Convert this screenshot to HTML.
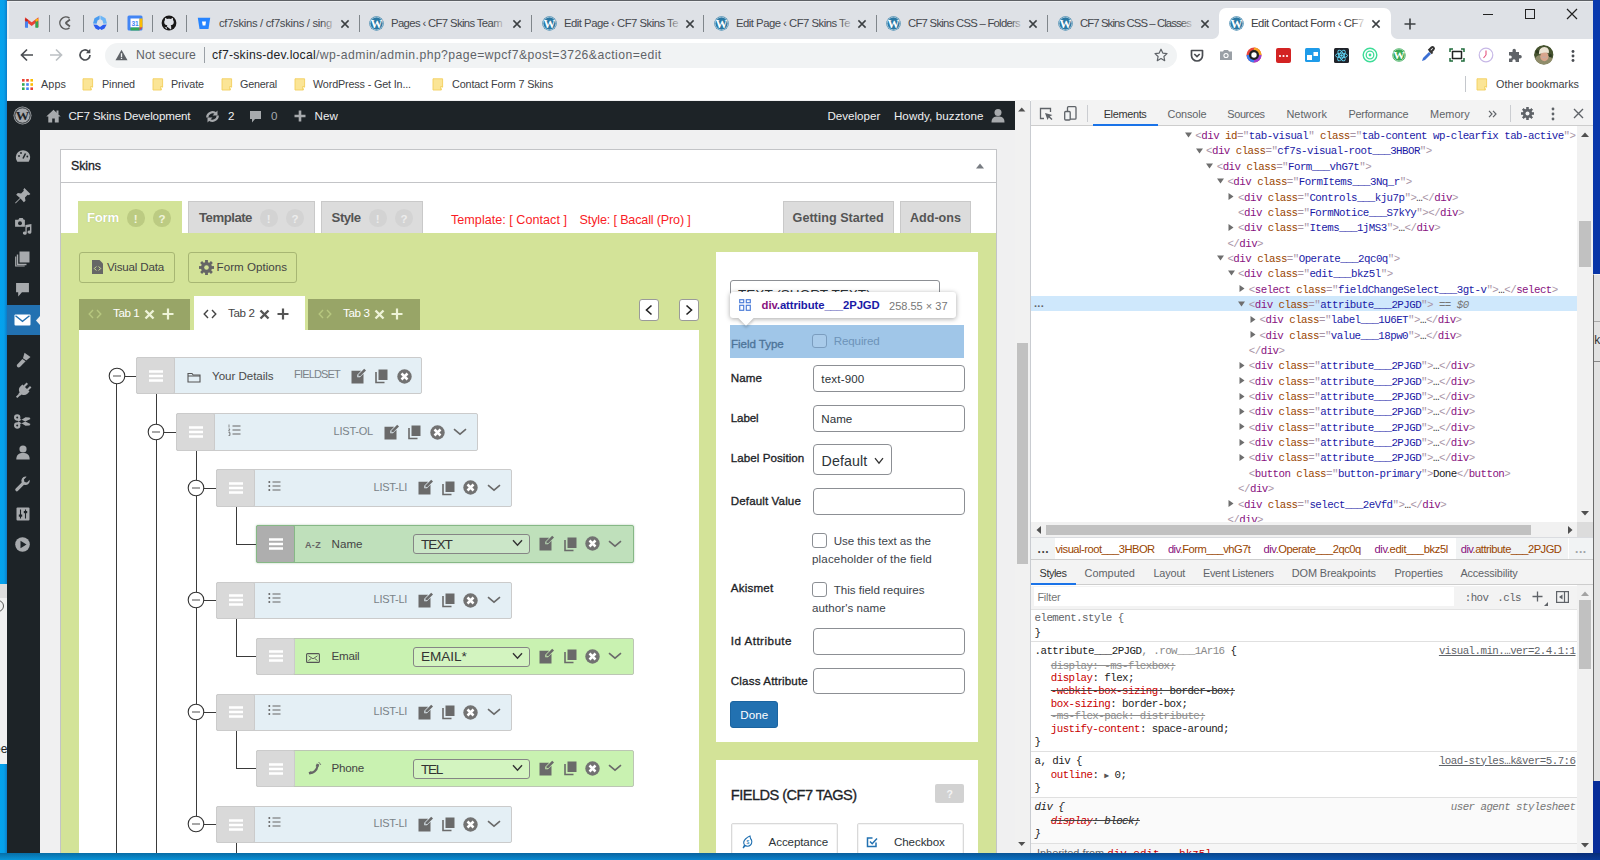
<!DOCTYPE html>
<html lang="en"><head><meta charset="utf-8"><title>Edit Contact Form ‹ CF7 Skins Development</title>
<style>
*{box-sizing:border-box;margin:0;padding:0}
html,body{width:1600px;height:860px;overflow:hidden}
body{position:relative;font-family:"Liberation Sans",sans-serif;background:linear-gradient(90deg,#0a9de2 0,#0b93dc 30%,#0c84d2 55%,#0d62bd 75%,#0a3c9c 100%)}
.b{position:absolute;display:block}
.t{position:absolute;white-space:nowrap;display:block}
svg{overflow:visible}
</style></head>
<body>
<div class="b" style="left:0;top:0;width:8px;height:860px;background:linear-gradient(90deg,#04a3ee 0,#06a0ea 50%,#0a7fcc 85%,#0a4f86 100%)"></div>
<div class="b" style="left:0;top:584px;width:7px;height:179.5px;background:#f0f0f0;border-top:14px solid #dddddd;overflow:hidden"><span class="t" style="left:-6px;top:144px;font-size:12px;color:#222">ee</span><span class="b" style="left:-8px;top:2px;width:12px;height:12px;border:1px solid #555;border-radius:50%"></span></div>
<div class="b" style="left:1592px;top:0;width:8px;height:860px;background:linear-gradient(180deg,#0839ae,#072c98)"></div>
<div class="b" style="left:1593px;top:273.5px;width:7px;height:507px;background:#e2e2e2;border-left:1.5px solid #6b6b6b;border-top:1px solid #f4f4f4;overflow:hidden"><span class="b" style="left:0;top:46px;width:8px;height:1px;background:#aaa"></span><span class="b" style="left:0;top:86px;width:8px;height:1px;background:#888"></span><span class="t" style="left:-3px;top:58px;font-size:12px;color:#333">:k</span></div>
<div class="b" style="left:7px;top:0px;width:1586px;height:39px;background:#dee1e6;"></div>
<div class="b" style="left:7px;top:0px;width:1586px;height:1px;background:#5d6065;"></div>
<div class="b" style="left:7px;top:1px;width:1586px;height:1px;background:#eceef1;"></div>
<div class="b" style="left:7px;top:1px;width:1.5px;height:38px;background:#eceef1;"></div>
<div class="b" style="left:7px;top:39px;width:1586px;height:62px;background:#fff;"></div>
<div class="b" style="left:1219px;top:8px;width:172px;height:31px;background:#fff;border-radius:7px 7px 0 0"></div>
<div class="b" style="left:1212px;top:32px;width:7px;height:7px;background:radial-gradient(circle at 0 0,#dee1e6 6.5px,#fff 7.5px)"></div>
<div class="b" style="left:1391px;top:32px;width:7px;height:7px;background:radial-gradient(circle at 100% 0,#dee1e6 6.5px,#fff 7.5px)"></div>
<svg class="b" style="left:24.8px;top:18.1px;" width="13.4" height="9.8" viewBox="0 0 16 12"><path d="M1.5 11V2.5L8 7.5L14.5 2.5V11" fill="none" stroke="#ea4335" stroke-width="3.5" stroke-linejoin="miter"/><path d="M1.7 12V4" stroke="#4285f4" stroke-width="3.5"/><path d="M14.3 12V4" stroke="#34a853" stroke-width="3.5"/><path d="M13 3.6l2.8 -2.1" stroke="#fbbc04" stroke-width="2.6"/><path d="M3 3.6l-2.8 -2.1" stroke="#c5221f" stroke-width="2.6"/></svg>
<div class="b" style="left:48.5px;top:15px;width:1.2px;height:17px;background:#80868b;"></div>
<div class="b" style="left:83px;top:15px;width:1.2px;height:17px;background:#80868b;"></div>
<div class="b" style="left:117px;top:15px;width:1.2px;height:17px;background:#80868b;"></div>
<div class="b" style="left:151.5px;top:15px;width:1.2px;height:17px;background:#80868b;"></div>
<div class="b" style="left:185.5px;top:15px;width:1.2px;height:17px;background:#80868b;"></div>
<div class="b" style="left:358.5px;top:15px;width:1.2px;height:17px;background:#80868b;"></div>
<div class="b" style="left:530.5px;top:15px;width:1.2px;height:17px;background:#80868b;"></div>
<div class="b" style="left:702.5px;top:15px;width:1.2px;height:17px;background:#80868b;"></div>
<div class="b" style="left:875.5px;top:15px;width:1.2px;height:17px;background:#80868b;"></div>
<div class="b" style="left:1046.5px;top:15px;width:1.2px;height:17px;background:#80868b;"></div>
<svg class="b" style="left:58px;top:15px;" width="16" height="16" viewBox="0 0 16 16"><path d="M11.5 3.2A6 6 0 1 0 11.5 12.8" fill="none" stroke="#5a5a5a" stroke-width="1.5"/><path d="M7.5 8L12 4.5M7.5 8L12 11.5" stroke="#5a5a5a" stroke-width="1.7" fill="none"/></svg>
<svg class="b" style="left:92px;top:15px;" width="16" height="16" viewBox="0 0 16 16"><path d="M7.6 .5L2.5 3.3L1 8.5L4.6 8.8L5.5 5.5L7.6 4.2z" fill="#4a9cf0"/><path d="M8.4 .5L13.5 3.3L15 8.5L11.4 8.8L10.5 5.5L8.4 4.2z" fill="#6db6f7"/><path d="M1.3 9.6L4.8 9.8L8 12L11.2 9.8L14.7 9.6L12.5 13.5L9.5 15L8 13.8L6.5 15L3.5 13.5z" fill="#2b5cf0"/></svg>
<svg class="b" style="left:126.5px;top:15px;" width="16" height="16" viewBox="0 0 16 16"><rect x="0.5" y="0.5" width="15" height="15" rx="1.5" fill="#4285f4"/><rect x="3.5" y="3.5" width="9" height="9" fill="#fff"/><rect x="12.5" y="3.5" width="3" height="9" fill="#fbbc04"/><rect x="3.5" y="12.5" width="9" height="3" fill="#34a853"/><path d="M12.5 12.5h3l-3 3z" fill="#ea4335"/><text x="8" y="11" font-size="6.5" font-weight="700" text-anchor="middle" fill="#4285f4" font-family="Liberation Sans,sans-serif">31</text></svg>
<svg class="b" style="left:161px;top:15px;" width="16" height="16" viewBox="0 0 16 16"><circle cx="8" cy="8" r="7.4" fill="#181717"/><path d="M5.8 14.5v-2.3c-2.2 .6 -2.8 -1.2 -3.4 -1.6M10.2 14.8v-3c0 -.8 -.3 -1.2 -.6 -1.5c1.8 -.2 3.2 -1 3.2 -3.3c0 -.8 -.3 -1.5 -.8 -2c.1 -.5 .2 -1.2 -.1 -1.9c0 0 -.7 -.2 -2 .8c-1.2 -.3 -2.6 -.3 -3.8 0c-1.3 -1 -2 -.8 -2 -.8c-.3 .7 -.2 1.4 -.1 1.9c-.5 .5 -.8 1.2 -.8 2c0 2.3 1.4 3.1 3.2 3.3c-.3 .3 -.5 .7 -.6 1.3" fill="#dee1e6" stroke="none"/></svg>
<svg class="b" style="left:197px;top:16.5px;" width="14" height="13" viewBox="0 0 14 13"><path d="M0.8 0.7h12.4l-1.7 11.3h-9z" fill="#2684ff"/><path d="M5 4.6h4l-.6 3.8h-2.7z" fill="#fff"/></svg>
<span class="t" style="letter-spacing:-0.316px;left:219px;top:15px;height:16px;line-height:16px;font-size:11.3px;color:#45484d;">cf7skins / cf7skins / sing</span>
<svg class="b" style="left:339px;top:17.5px;" width="12" height="12" viewBox="0 0 12 12"><path d="M2.4 2.4L9.6 9.6M9.6 2.4L2.4 9.6" stroke="#3c4043" stroke-width="1.5" fill="none"/></svg>
<svg class="b" style="left:369px;top:15.5px;" width="15" height="15" viewBox="0 0 16 16"><circle cx="8" cy="8" r="7.7" fill="#2a78a4"/><circle cx="8" cy="8" r="6.8" fill="none" stroke="#fff" stroke-width=".7" opacity=".8"/><text x="8" y="12.3" font-size="12.8" font-weight="700" font-family="Liberation Serif,serif" text-anchor="middle" fill="#fff">W</text></svg>
<span class="t" style="letter-spacing:-0.626px;left:391px;top:15px;height:16px;line-height:16px;font-size:11.3px;color:#45484d;">Pages ‹ CF7 Skins Team</span>
<svg class="b" style="left:511px;top:17.5px;" width="12" height="12" viewBox="0 0 12 12"><path d="M2.4 2.4L9.6 9.6M9.6 2.4L2.4 9.6" stroke="#3c4043" stroke-width="1.5" fill="none"/></svg>
<svg class="b" style="left:541.5px;top:15.5px;" width="15" height="15" viewBox="0 0 16 16"><circle cx="8" cy="8" r="7.7" fill="#2a78a4"/><circle cx="8" cy="8" r="6.8" fill="none" stroke="#fff" stroke-width=".7" opacity=".8"/><text x="8" y="12.3" font-size="12.8" font-weight="700" font-family="Liberation Serif,serif" text-anchor="middle" fill="#fff">W</text></svg>
<span class="t" style="letter-spacing:-0.501px;left:564px;top:15px;height:16px;line-height:16px;font-size:11.3px;color:#45484d;">Edit Page ‹ CF7 Skins Te</span>
<svg class="b" style="left:684px;top:17.5px;" width="12" height="12" viewBox="0 0 12 12"><path d="M2.4 2.4L9.6 9.6M9.6 2.4L2.4 9.6" stroke="#3c4043" stroke-width="1.5" fill="none"/></svg>
<svg class="b" style="left:713.5px;top:15.5px;" width="15" height="15" viewBox="0 0 16 16"><circle cx="8" cy="8" r="7.7" fill="#2a78a4"/><circle cx="8" cy="8" r="6.8" fill="none" stroke="#fff" stroke-width=".7" opacity=".8"/><text x="8" y="12.3" font-size="12.8" font-weight="700" font-family="Liberation Serif,serif" text-anchor="middle" fill="#fff">W</text></svg>
<span class="t" style="letter-spacing:-0.501px;left:736px;top:15px;height:16px;line-height:16px;font-size:11.3px;color:#45484d;">Edit Page ‹ CF7 Skins Te</span>
<svg class="b" style="left:856px;top:17.5px;" width="12" height="12" viewBox="0 0 12 12"><path d="M2.4 2.4L9.6 9.6M9.6 2.4L2.4 9.6" stroke="#3c4043" stroke-width="1.5" fill="none"/></svg>
<svg class="b" style="left:885.5px;top:15.5px;" width="15" height="15" viewBox="0 0 16 16"><circle cx="8" cy="8" r="7.7" fill="#2a78a4"/><circle cx="8" cy="8" r="6.8" fill="none" stroke="#fff" stroke-width=".7" opacity=".8"/><text x="8" y="12.3" font-size="12.8" font-weight="700" font-family="Liberation Serif,serif" text-anchor="middle" fill="#fff">W</text></svg>
<span class="t" style="letter-spacing:-0.728px;left:908px;top:15px;height:16px;line-height:16px;font-size:11.3px;color:#45484d;">CF7 Skins CSS – Folders</span>
<svg class="b" style="left:1027px;top:17.5px;" width="12" height="12" viewBox="0 0 12 12"><path d="M2.4 2.4L9.6 9.6M9.6 2.4L2.4 9.6" stroke="#3c4043" stroke-width="1.5" fill="none"/></svg>
<svg class="b" style="left:1057.5px;top:15.5px;" width="15" height="15" viewBox="0 0 16 16"><circle cx="8" cy="8" r="7.7" fill="#2a78a4"/><circle cx="8" cy="8" r="6.8" fill="none" stroke="#fff" stroke-width=".7" opacity=".8"/><text x="8" y="12.3" font-size="12.8" font-weight="700" font-family="Liberation Serif,serif" text-anchor="middle" fill="#fff">W</text></svg>
<span class="t" style="letter-spacing:-0.88px;left:1080px;top:15px;height:16px;line-height:16px;font-size:11.3px;color:#45484d;">CF7 Skins CSS – Classes</span>
<svg class="b" style="left:1199px;top:17.5px;" width="12" height="12" viewBox="0 0 12 12"><path d="M2.4 2.4L9.6 9.6M9.6 2.4L2.4 9.6" stroke="#3c4043" stroke-width="1.5" fill="none"/></svg>
<svg class="b" style="left:1228.5px;top:15.5px;" width="15" height="15" viewBox="0 0 16 16"><circle cx="8" cy="8" r="7.7" fill="#2a78a4"/><circle cx="8" cy="8" r="6.8" fill="none" stroke="#fff" stroke-width=".7" opacity=".8"/><text x="8" y="12.3" font-size="12.8" font-weight="700" font-family="Liberation Serif,serif" text-anchor="middle" fill="#fff">W</text></svg>
<span class="t" style="letter-spacing:-0.411px;left:1251px;top:15px;height:16px;line-height:16px;font-size:11.3px;color:#3c4043;">Edit Contact Form ‹ CF7</span>
<svg class="b" style="left:1370px;top:17.5px;" width="12" height="12" viewBox="0 0 12 12"><path d="M2.4 2.4L9.6 9.6M9.6 2.4L2.4 9.6" stroke="#3c4043" stroke-width="1.5" fill="none"/></svg>
<div class="b" style="left:322px;top:14px;width:14px;height:18px;background:linear-gradient(90deg,rgba(222,225,230,0),rgba(222,225,230,1))"></div>
<div class="b" style="left:492px;top:14px;width:14px;height:18px;background:linear-gradient(90deg,rgba(222,225,230,0),rgba(222,225,230,1))"></div>
<div class="b" style="left:668px;top:14px;width:14px;height:18px;background:linear-gradient(90deg,rgba(222,225,230,0),rgba(222,225,230,1))"></div>
<div class="b" style="left:840px;top:14px;width:14px;height:18px;background:linear-gradient(90deg,rgba(222,225,230,0),rgba(222,225,230,1))"></div>
<div class="b" style="left:1010px;top:14px;width:14px;height:18px;background:linear-gradient(90deg,rgba(222,225,230,0),rgba(222,225,230,1))"></div>
<div class="b" style="left:1181px;top:14px;width:14px;height:18px;background:linear-gradient(90deg,rgba(222,225,230,0),rgba(222,225,230,1))"></div>
<div class="b" style="left:1352px;top:14px;width:14px;height:18px;background:linear-gradient(90deg,rgba(255,255,255,0),rgba(255,255,255,1))"></div>
<svg class="b" style="left:1403px;top:16.5px;" width="14" height="14" viewBox="0 0 14 14"><path d="M7 1.5v11M1.5 7h11" stroke="#3c4043" stroke-width="1.6"/></svg>
<div class="b" style="left:1483px;top:14px;width:10px;height:1.2px;background:#222;"></div>
<div class="b" style="left:1525px;top:9px;width:10px;height:10px;border:1.2px solid #222"></div>
<svg class="b" style="left:1566px;top:8px;" width="12" height="12" viewBox="0 0 12 12"><path d="M1 1L11 11M11 1L1 11" stroke="#222" stroke-width="1.2" fill="none"/></svg>
<svg class="b" style="left:19px;top:47px;" width="16" height="16" viewBox="0 0 16 16"><path d="M14 8H2.8M8 2.5L2.5 8L8 13.5" fill="none" stroke="#4a4d52" stroke-width="1.7"/></svg>
<svg class="b" style="left:48px;top:47px;" width="16" height="16" viewBox="0 0 16 16"><path d="M2 8h11.2M8 2.5L13.5 8L8 13.5" fill="none" stroke="#bcc0c4" stroke-width="1.7"/></svg>
<svg class="b" style="left:77px;top:47px;" width="16" height="16" viewBox="0 0 16 16"><path d="M13 8A5 5 0 1 1 11.4 4.3" fill="none" stroke="#4a4d52" stroke-width="1.7"/><path d="M13.3 1.8v4.4h-4.4z" fill="#4a4d52"/></svg>
<div class="b" style="left:105px;top:42.5px;width:1072px;height:25.5px;border-radius:13px;background:#f1f3f4"></div>
<svg class="b" style="left:114.5px;top:49px;" width="13" height="12" viewBox="0 0 13 12"><path d="M6.5 0.8L12.5 11.2H0.5z" fill="#5f6368"/><path d="M6.5 4.3v3.6M6.5 8.8v1.3" stroke="#f1f3f4" stroke-width="1.3"/></svg>
<span class="t" style="letter-spacing:0.101px;left:136px;top:47px;height:16px;line-height:16px;font-size:12.2px;color:#5f6368;">Not secure</span>
<div class="b" style="left:204px;top:47px;width:1px;height:16px;background:#9aa0a6;"></div>
<span class="t" style="letter-spacing:0.24px;left:212px;top:47px;height:16px;line-height:16px;font-size:12.2px;color:#202124;">cf7-skins-dev.local</span>
<span class="t" style="letter-spacing:0.452px;left:316px;top:47px;height:16px;line-height:16px;font-size:12.2px;color:#5f6368;">/wp-admin/admin.php?page=wpcf7&amp;post=3726&amp;action=edit</span>
<svg class="b" style="left:1154px;top:48px;" width="14" height="14" viewBox="0 0 14 14"><path d="M7 1.2l1.8 3.9l4.2 .5l-3.1 2.9l.8 4.2L7 10.6l-3.7 2.1l.8 -4.2L1 5.6l4.2 -.5z" fill="none" stroke="#5f6368" stroke-width="1.2" stroke-linejoin="round"/></svg>
<svg class="b" style="left:1190px;top:48.5px;" width="14" height="13" viewBox="0 0 14 13"><path d="M1.5 1.5h11v5a5.5 5.5 0 0 1 -11 0z" fill="none" stroke="#4a4d52" stroke-width="1.7" stroke-linejoin="round"/><path d="M4.3 5l2.7 2.6L9.7 5" fill="none" stroke="#4a4d52" stroke-width="1.7"/></svg>
<svg class="b" style="left:1219px;top:49px;" width="14" height="12" viewBox="0 0 14 12"><path d="M1 2.5h3l1 -1.5h4l1 1.5h3v8.5h-12z" fill="#9aa0a6"/><circle cx="7" cy="6.5" r="2.6" fill="#fff"/><circle cx="7" cy="6.5" r="1.5" fill="#9aa0a6"/></svg>
<svg class="b" style="left:1246px;top:47px;" width="16" height="16" viewBox="0 0 16 16"><circle cx="8" cy="8" r="7.5" fill="#e8453c"/><path d="M8 .5A7.5 7.5 0 0 1 15.5 8H8z" fill="#f5a623"/><path d="M.5 8A7.5 7.5 0 0 0 8 15.5V8z" fill="#3b7ded"/><path d="M8 15.5A7.5 7.5 0 0 0 15.5 8H8z" fill="#a03fd0"/><circle cx="8" cy="8" r="5" fill="#222"/><circle cx="8" cy="8" r="2.7" fill="#fff"/></svg>
<svg class="b" style="left:1275.5px;top:47.5px;" width="15" height="15" viewBox="0 0 15 15"><rect x="0" y="0" width="15" height="15" rx="2" fill="#d32323"/><circle cx="4" cy="8" r="1.1" fill="#fff"/><circle cx="7.5" cy="8" r="1.1" fill="#fff"/><circle cx="11" cy="8" r="1.1" fill="#fff"/></svg>
<svg class="b" style="left:1304.5px;top:48px;" width="15" height="14" viewBox="0 0 15 14"><rect x="0" y="0" width="15" height="14" rx="1.5" fill="#1e9be9"/><rect x="2" y="7" width="5" height="5" fill="#fff"/><rect x="8.5" y="4" width="4.5" height="4" fill="#fff"/></svg>
<svg class="b" style="left:1333.5px;top:47.5px;" width="15" height="15" viewBox="0 0 15 15"><rect width="15" height="15" rx="1.5" fill="#20232a"/><g fill="none" stroke="#61dafb" stroke-width=".9"><ellipse cx="7.5" cy="7.5" rx="6" ry="2.3"/><ellipse cx="7.5" cy="7.5" rx="6" ry="2.3" transform="rotate(60 7.5 7.5)"/><ellipse cx="7.5" cy="7.5" rx="6" ry="2.3" transform="rotate(120 7.5 7.5)"/></g><circle cx="7.5" cy="7.5" r="1.2" fill="#61dafb"/></svg>
<svg class="b" style="left:1362px;top:47px;" width="16" height="16" viewBox="0 0 16 16"><circle cx="8" cy="8" r="6.8" fill="none" stroke="#3ddc97" stroke-width="1.4"/><circle cx="8" cy="8" r="3.8" fill="none" stroke="#3ddc97" stroke-width="1.3"/><circle cx="8" cy="8" r="1.4" fill="#3ddc97"/></svg>
<svg class="b" style="left:1392px;top:48px;" width="14" height="14" viewBox="0 0 16 16"><circle cx="8" cy="8" r="7.7" fill="#35a853"/><circle cx="8" cy="8" r="6.8" fill="none" stroke="#fff" stroke-width=".7" opacity=".8"/><text x="8" y="12.3" font-size="12.8" font-weight="700" font-family="Liberation Serif,serif" text-anchor="middle" fill="#fff">W</text></svg>
<svg class="b" style="left:1420px;top:47px;" width="16" height="16" viewBox="0 0 16 16"><path d="M2 14l1 -3l6 -6l2 2l-6 6z" fill="#3b6fd4"/><path d="M9.5 3.5l3 3M10.5 5.5l3 -3a1.4 1.4 0 0 0 -2 -2l-3 3" stroke="#333" stroke-width="2" fill="none"/></svg>
<svg class="b" style="left:1449px;top:48px;" width="16" height="14" viewBox="0 0 16 14"><path d="M1 4V1h3M12 1h3v3M15 10v3h-3M4 13H1v-3" fill="none" stroke="#1e6b3a" stroke-width="1.5"/><rect x="3.5" y="3.5" width="9" height="7" fill="none" stroke="#222" stroke-width="1.5"/></svg>
<svg class="b" style="left:1478px;top:47px;" width="16" height="16" viewBox="0 0 16 16"><circle cx="8" cy="8" r="6.8" fill="#fff" stroke="#c7b8e6" stroke-width="1.2"/><path d="M8 8V3.5M8 8l-2.5 3" stroke="#e5527d" stroke-width="1.1" fill="none"/></svg>
<svg class="b" style="left:1506.8px;top:47.5px;" width="15" height="15" viewBox="0 0 15 15"><path d="M5.5 2.5a1.7 1.7 0 0 1 3.4 0V4h3.1v3.1h1.1a1.7 1.7 0 0 1 0 3.4H12V14H8.6v-1.2a1.6 1.6 0 0 0 -3.2 0V14H2v-3.4h1.2a1.6 1.6 0 0 0 0 -3.2H2V4h3.5z" fill="#5f6368"/></svg>
<svg class="b" style="left:1534.3px;top:45.3px;border-radius:50%;overflow:hidden;" width="19.4" height="19.4" viewBox="0 0 20 20"><circle cx="10" cy="10" r="10" fill="#46532f"/><path d="M1 14c2 -3 4 -4 6 -3l6 .5c3 -.5 5 1 6 3.5a10 10 0 0 1 -18 -1z" fill="#8f8c6a"/><ellipse cx="10.7" cy="11.8" rx="4.3" ry="5" fill="#d8a58d"/><path d="M5.3 9.6c-.8 -4.5 2 -7.6 5.3 -7.6c3.6 0 5.6 3 4.6 6.5c-2.5 -1 -5.5 -1 -8 .3c-.8 .4 -1.5 .6 -1.9 .8z" fill="#ece4d4"/><path d="M8.6 12.8c1.2 -.5 2.8 -.5 4 0" stroke="#b9b0ae" stroke-width="1" fill="none"/><circle cx="3.5" cy="7" r="1.8" fill="#2f3b22"/><circle cx="16.8" cy="11" r="1.6" fill="#2f3b22"/></svg>
<svg class="b" style="left:1571.4px;top:47.5px;" width="4" height="16" viewBox="0 0 4 16"><circle cx="2" cy="3.5" r="1.45" fill="#4a4d52"/><circle cx="2" cy="8" r="1.45" fill="#4a4d52"/><circle cx="2" cy="12.5" r="1.45" fill="#4a4d52"/></svg>
<svg class="b" style="left:21.5px;top:78.5px;" width="11" height="11" viewBox="0 0 11 11"><rect x="0" y="0" width="2.6" height="2.6" fill="#ea4335"/><rect x="4.2" y="0" width="2.6" height="2.6" fill="#ea4335"/><rect x="8.4" y="0" width="2.6" height="2.6" fill="#fbbc04"/><rect x="0" y="4.2" width="2.6" height="2.6" fill="#34a853"/><rect x="4.2" y="4.2" width="2.6" height="2.6" fill="#4285f4"/><rect x="8.4" y="4.2" width="2.6" height="2.6" fill="#fbbc04"/><rect x="0" y="8.4" width="2.6" height="2.6" fill="#34a853"/><rect x="4.2" y="8.4" width="2.6" height="2.6" fill="#4285f4"/><rect x="8.4" y="8.4" width="2.6" height="2.6" fill="#ea4335"/></svg>
<span class="t" style="letter-spacing:0.096px;left:41px;top:76px;height:16px;line-height:16px;font-size:10.8px;color:#3c4043;">Apps</span>
<svg class="b" style="left:82px;top:77.5px;" width="12" height="13" viewBox="0 0 12 13"><path d="M1 .8h9.6v8.4l-1.2 0v2.8h-8.4z" fill="#fbe596" stroke="#f3cf5d" stroke-width=".9"/><path d="M8.6 12v-3.5h2.3" fill="#fff3c4" stroke="#f3cf5d" stroke-width=".8"/></svg>
<span class="t" style="letter-spacing:-0.105px;left:102px;top:76px;height:16px;line-height:16px;font-size:10.8px;color:#3c4043;">Pinned</span>
<svg class="b" style="left:152px;top:77.5px;" width="12" height="13" viewBox="0 0 12 13"><path d="M1 .8h9.6v8.4l-1.2 0v2.8h-8.4z" fill="#fbe596" stroke="#f3cf5d" stroke-width=".9"/><path d="M8.6 12v-3.5h2.3" fill="#fff3c4" stroke="#f3cf5d" stroke-width=".8"/></svg>
<span class="t" style="letter-spacing:-0.088px;left:171px;top:76px;height:16px;line-height:16px;font-size:10.8px;color:#3c4043;">Private</span>
<svg class="b" style="left:221px;top:77.5px;" width="12" height="13" viewBox="0 0 12 13"><path d="M1 .8h9.6v8.4l-1.2 0v2.8h-8.4z" fill="#fbe596" stroke="#f3cf5d" stroke-width=".9"/><path d="M8.6 12v-3.5h2.3" fill="#fff3c4" stroke="#f3cf5d" stroke-width=".8"/></svg>
<span class="t" style="letter-spacing:-0.203px;left:240px;top:76px;height:16px;line-height:16px;font-size:10.8px;color:#3c4043;">General</span>
<svg class="b" style="left:294px;top:77.5px;" width="12" height="13" viewBox="0 0 12 13"><path d="M1 .8h9.6v8.4l-1.2 0v2.8h-8.4z" fill="#fbe596" stroke="#f3cf5d" stroke-width=".9"/><path d="M8.6 12v-3.5h2.3" fill="#fff3c4" stroke="#f3cf5d" stroke-width=".8"/></svg>
<span class="t" style="letter-spacing:-0.154px;left:313px;top:76px;height:16px;line-height:16px;font-size:10.8px;color:#3c4043;">WordPress - Get In...</span>
<svg class="b" style="left:432px;top:77.5px;" width="12" height="13" viewBox="0 0 12 13"><path d="M1 .8h9.6v8.4l-1.2 0v2.8h-8.4z" fill="#fbe596" stroke="#f3cf5d" stroke-width=".9"/><path d="M8.6 12v-3.5h2.3" fill="#fff3c4" stroke="#f3cf5d" stroke-width=".8"/></svg>
<span class="t" style="letter-spacing:-0.142px;left:452px;top:76px;height:16px;line-height:16px;font-size:10.8px;color:#3c4043;">Contact Form 7 Skins</span>
<div class="b" style="left:1465px;top:76px;width:1px;height:16px;background:#c4c7cc;"></div>
<svg class="b" style="left:1476px;top:77.5px;" width="12" height="13" viewBox="0 0 12 13"><path d="M1 .8h9.6v8.4l-1.2 0v2.8h-8.4z" fill="#fbe596" stroke="#f3cf5d" stroke-width=".9"/><path d="M8.6 12v-3.5h2.3" fill="#fff3c4" stroke="#f3cf5d" stroke-width=".8"/></svg>
<span class="t" style="letter-spacing:0.011px;left:1496px;top:76px;height:16px;line-height:16px;font-size:10.8px;color:#3c4043;">Other bookmarks</span>
<div class="b" style="left:7px;top:100px;width:1023px;height:752.5px;background:#f0f0f1;"></div>
<div class="b" style="left:60px;top:149px;width:937px;height:704px;background:#fff;border:1px solid #c3c4c7;border-bottom:0;"></div>
<div class="b" style="left:61px;top:182px;width:935px;height:1px;background:#c3c4c7;"></div>
<span class="t" style="letter-spacing:-0.065px;left:71px;top:158px;height:16px;line-height:16px;font-size:12.4px;color:#1d2327;-webkit-text-stroke:.32px;">Skins</span>
<svg class="b" style="left:975.6px;top:162.5px;" width="8" height="6" viewBox="0 0 8 6"><path d="M0 5.5L4 .5L8 5.5z" fill="#787c82"/></svg>
<div class="b" style="left:78px;top:201px;width:104px;height:33px;background:#d3e398;"></div>
<span class="t" style="letter-spacing:-0.25px;left:87px;top:210px;height:16px;line-height:16px;font-size:13.2px;color:#fff;font-weight:700;text-shadow:0 0 1px rgba(120,140,60,.5);">Form</span>
<div class="b" style="left:127.2px;top:209.2px;width:17.6px;height:17.6px;border-radius:50%;background:#bccb82"></div>
<span class="t" style="left:133.8px;top:210.5px;height:16px;line-height:16px;font-size:11.5px;color:#f0f4dc;font-weight:700;">!</span>
<div class="b" style="left:153.2px;top:209.2px;width:17.6px;height:17.6px;border-radius:50%;background:#bccb82"></div>
<span class="t" style="left:158.5px;top:210.5px;height:16px;line-height:16px;font-size:11.5px;color:#f0f4dc;font-weight:700;">?</span>
<div class="b" style="left:188px;top:201px;width:126.5px;height:32px;background:#dcdcdc;border:1px solid #c9c9c9;border-bottom:0;"></div>
<span class="t" style="letter-spacing:-0.496px;left:199px;top:210px;height:16px;line-height:16px;font-size:13.2px;color:#555;font-weight:700;">Template</span>
<div class="b" style="left:260.2px;top:209.2px;width:17.6px;height:17.6px;border-radius:50%;background:#d3d3d3"></div>
<span class="t" style="left:266.8px;top:210.5px;height:16px;line-height:16px;font-size:11.5px;color:#ececec;font-weight:700;">!</span>
<div class="b" style="left:286.2px;top:209.2px;width:17.6px;height:17.6px;border-radius:50%;background:#d3d3d3"></div>
<span class="t" style="left:291.5px;top:210.5px;height:16px;line-height:16px;font-size:11.5px;color:#ececec;font-weight:700;">?</span>
<div class="b" style="left:321px;top:201px;width:102px;height:32px;background:#dcdcdc;border:1px solid #c9c9c9;border-bottom:0;"></div>
<span class="t" style="letter-spacing:-0.51px;left:331.6px;top:210px;height:16px;line-height:16px;font-size:13.2px;color:#555;font-weight:700;">Style</span>
<div class="b" style="left:369.2px;top:209.2px;width:17.6px;height:17.6px;border-radius:50%;background:#d3d3d3"></div>
<span class="t" style="left:375.8px;top:210.5px;height:16px;line-height:16px;font-size:11.5px;color:#ececec;font-weight:700;">!</span>
<div class="b" style="left:395.2px;top:209.2px;width:17.6px;height:17.6px;border-radius:50%;background:#d3d3d3"></div>
<span class="t" style="left:400.5px;top:210.5px;height:16px;line-height:16px;font-size:11.5px;color:#ececec;font-weight:700;">?</span>
<span class="t" style="letter-spacing:0.021px;left:451px;top:211.7px;height:16px;line-height:16px;font-size:12.6px;color:#f91c26;">Template: [ Contact ]</span>
<span class="t" style="letter-spacing:-0.162px;left:579.6px;top:211.7px;height:16px;line-height:16px;font-size:12.6px;color:#f91c26;">Style: [ Bacall (Pro) ]</span>
<div class="b" style="left:782.5px;top:201px;width:111px;height:32px;background:#dcdcdc;border:1px solid #c9c9c9;border-bottom:0;"></div>
<span class="t" style="letter-spacing:0.006px;left:792.6px;top:210px;height:16px;line-height:16px;font-size:12.6px;color:#555;font-weight:700;">Getting Started</span>
<div class="b" style="left:900px;top:201px;width:71px;height:32px;background:#dcdcdc;border:1px solid #c9c9c9;border-bottom:0;"></div>
<span class="t" style="letter-spacing:-0.013px;left:910px;top:210px;height:16px;line-height:16px;font-size:12.6px;color:#555;font-weight:700;">Add-ons</span>
<div class="b" style="left:61px;top:233px;width:935px;height:620px;background:#d3e398;"></div>
<div class="b" style="left:79px;top:252px;width:95.5px;height:31px;border:1px solid #a7b673;border-radius:3px;"></div>
<svg class="b" style="left:91.5px;top:260px;" width="11" height="14" viewBox="0 0 11 14"><path d="M0 0h7.5l3.5 3.5v10.5h-11z" fill="#666"/><path d="M4.3 6.5l-2 2l2 2M6.7 6.5l2 2l-2 2" stroke="#d3e398" stroke-width="1" fill="none"/></svg>
<span class="t" style="letter-spacing:-0.192px;left:107px;top:259px;height:16px;line-height:16px;font-size:11.6px;color:#444;">Visual Data</span>
<div class="b" style="left:188px;top:252px;width:109px;height:31px;border:1px solid #a7b673;border-radius:3px;"></div>
<svg class="b" style="left:199px;top:259.5px;" width="15" height="15" viewBox="0 0 15 15"><rect x="6.3" y="0" width="2.4" height="15" fill="#666" transform="rotate(0 7.5 7.5)"/><rect x="6.3" y="0" width="2.4" height="15" fill="#666" transform="rotate(45 7.5 7.5)"/><rect x="6.3" y="0" width="2.4" height="15" fill="#666" transform="rotate(90 7.5 7.5)"/><rect x="6.3" y="0" width="2.4" height="15" fill="#666" transform="rotate(135 7.5 7.5)"/><rect x="6.3" y="0" width="2.4" height="15" fill="#666" transform="rotate(180 7.5 7.5)"/><rect x="6.3" y="0" width="2.4" height="15" fill="#666" transform="rotate(225 7.5 7.5)"/><rect x="6.3" y="0" width="2.4" height="15" fill="#666" transform="rotate(270 7.5 7.5)"/><rect x="6.3" y="0" width="2.4" height="15" fill="#666" transform="rotate(315 7.5 7.5)"/><circle cx="7.5" cy="7.5" r="5.5" fill="#666"/><circle cx="7.5" cy="7.5" r="2.3" fill="#d3e398"/></svg>
<span class="t" style="letter-spacing:0.011px;left:216.6px;top:259px;height:16px;line-height:16px;font-size:11.6px;color:#444;">Form Options</span>
<div class="b" style="left:79px;top:299px;width:111px;height:30.5px;background:#98a567;"></div>
<svg class="b" style="left:88px;top:309px;" width="14" height="10" viewBox="0 0 14 10"><path d="M5 1L1.2 5L5 9M9 1l3.8 4L9 9" fill="none" stroke="#b7c77f" stroke-width="1.4"/></svg>
<span class="t" style="letter-spacing:-0.395px;left:113px;top:305px;height:16px;line-height:16px;font-size:11.6px;color:#fff;">Tab 1</span>
<svg class="b" style="left:144px;top:309px;" width="11" height="11" viewBox="0 0 11 11"><path d="M1.5 1.5l8 8M9.5 1.5l-8 8" stroke="#eef3d8" stroke-width="2.4"/></svg>
<svg class="b" style="left:162px;top:307.5px;" width="12" height="12" viewBox="0 0 12 12"><path d="M6 .5v11M.5 6h11" stroke="#eef3d8" stroke-width="2.2"/></svg>
<div class="b" style="left:193.5px;top:295.5px;width:111px;height:34.5px;background:#fff;"></div>
<svg class="b" style="left:203px;top:309px;" width="14" height="10" viewBox="0 0 14 10"><path d="M5 1L1.2 5L5 9M9 1l3.8 4L9 9" fill="none" stroke="#444" stroke-width="1.4"/></svg>
<span class="t" style="letter-spacing:-0.335px;left:228px;top:305px;height:16px;line-height:16px;font-size:11.6px;color:#444;">Tab 2</span>
<svg class="b" style="left:259px;top:309px;" width="11" height="11" viewBox="0 0 11 11"><path d="M1.5 1.5l8 8M9.5 1.5l-8 8" stroke="#555" stroke-width="2.4"/></svg>
<svg class="b" style="left:276.7px;top:307.5px;" width="12" height="12" viewBox="0 0 12 12"><path d="M6 .5v11M.5 6h11" stroke="#555" stroke-width="2.2"/></svg>
<div class="b" style="left:308px;top:299px;width:112px;height:30.5px;background:#98a567;"></div>
<svg class="b" style="left:317.8px;top:309px;" width="14" height="10" viewBox="0 0 14 10"><path d="M5 1L1.2 5L5 9M9 1l3.8 4L9 9" fill="none" stroke="#b7c77f" stroke-width="1.4"/></svg>
<span class="t" style="letter-spacing:-0.335px;left:343px;top:305px;height:16px;line-height:16px;font-size:11.6px;color:#fff;">Tab 3</span>
<svg class="b" style="left:373.5px;top:309px;" width="11" height="11" viewBox="0 0 11 11"><path d="M1.5 1.5l8 8M9.5 1.5l-8 8" stroke="#eef3d8" stroke-width="2.4"/></svg>
<svg class="b" style="left:391.4px;top:307.5px;" width="12" height="12" viewBox="0 0 12 12"><path d="M6 .5v11M.5 6h11" stroke="#eef3d8" stroke-width="2.2"/></svg>
<div class="b" style="left:79px;top:329.5px;width:619.5px;height:523.5px;background:#fff;"></div>
<div class="b" style="left:639px;top:299px;width:20px;height:22px;background:#fff;border:1px solid #9a9a9a;border-radius:3px;"></div>
<svg class="b" style="left:643px;top:303px;" width="12" height="14" viewBox="0 0 12 14"><path d="M8.5 2.5L3.5 7L8.5 11.5" fill="none" stroke="#222" stroke-width="1.6"/></svg>
<div class="b" style="left:679px;top:299px;width:20px;height:22px;background:#fff;border:1px solid #9a9a9a;border-radius:3px;"></div>
<svg class="b" style="left:683px;top:303px;" width="12" height="14" viewBox="0 0 12 14"><path d="M3.5 2.5L8.5 7L3.5 11.5" fill="none" stroke="#222" stroke-width="1.6"/></svg>
<div class="b" style="left:116px;top:376px;width:1px;height:477px;background:#3a3a3a;"></div>
<div class="b" style="left:116px;top:375.5px;width:21px;height:1px;background:#3a3a3a;"></div>
<div class="b" style="left:155.7px;top:394px;width:1px;height:459px;background:#3a3a3a;"></div>
<div class="b" style="left:155.7px;top:431.5px;width:21.3px;height:1px;background:#3a3a3a;"></div>
<div class="b" style="left:195.5px;top:450px;width:1px;height:374px;background:#3a3a3a;"></div>
<div class="b" style="left:196px;top:487.5px;width:21px;height:1px;background:#3a3a3a;"></div>
<div class="b" style="left:196px;top:599.5px;width:21px;height:1px;background:#3a3a3a;"></div>
<div class="b" style="left:196px;top:711.5px;width:21px;height:1px;background:#3a3a3a;"></div>
<div class="b" style="left:196px;top:823.5px;width:21px;height:1px;background:#3a3a3a;"></div>
<div class="b" style="left:235.5px;top:506px;width:1px;height:39px;background:#3a3a3a;"></div>
<div class="b" style="left:235.5px;top:544px;width:21.5px;height:1px;background:#3a3a3a;"></div>
<div class="b" style="left:235.5px;top:618px;width:1px;height:39px;background:#3a3a3a;"></div>
<div class="b" style="left:235.5px;top:656px;width:21.5px;height:1px;background:#3a3a3a;"></div>
<div class="b" style="left:235.5px;top:730px;width:1px;height:39px;background:#3a3a3a;"></div>
<div class="b" style="left:235.5px;top:768px;width:21.5px;height:1px;background:#3a3a3a;"></div>
<div class="b" style="left:235.5px;top:842px;width:1px;height:11px;background:#3a3a3a;"></div>
<div class="b" style="left:136.3px;top:357.1px;width:286.2px;height:37.4px;background:#e4eff5;border:1px solid #cbcbcb;border-radius:2px;"></div>
<div class="b" style="left:136.3px;top:357.1px;width:38.9px;height:37.4px;background:#d9d9d9;border:1px solid #cbcbcb;border-radius:2px;"></div>
<svg class="b" style="left:148.75px;top:368.8px;" width="14" height="14" viewBox="0 0 14 14"><path d="M0 2.5h14M0 7h14M0 11.5h14" stroke="#fff" stroke-width="2.4"/></svg>
<svg class="b" style="left:107.6px;top:367px;" width="18" height="18" viewBox="0 0 18 18"><circle cx="9" cy="9" r="7.8" fill="#fff" stroke="#333" stroke-width="1.1"/><path d="M5 9h8" stroke="#777" stroke-width="1.3"/></svg>
<svg class="b" style="left:187px;top:371px;" width="14" height="12" viewBox="0 0 14 12"><path d="M1 2.5h4l1.2 1.5h6.8v7h-12z" fill="none" stroke="#555" stroke-width="1.1"/><path d="M1 5h12" stroke="#555" stroke-width="1"/></svg>
<span class="t" style="letter-spacing:-0.043px;left:212px;top:367.8px;height:16px;line-height:16px;font-size:11.6px;color:#4a4a4a;">Your Details</span>
<span class="t" style="letter-spacing:-0.821px;left:294px;top:366.3px;height:16px;line-height:16px;font-size:11px;color:#7a8288;">FIELDSET</span>
<svg class="b" style="left:351.25px;top:367.55px;" width="15.5" height="15.5" viewBox="0 0 15.5 15.5"><path d="M.5 2.8h9.7l-3.9 3.9v2.6h2.6l3.6 -3.6v9.8h-12z" fill="#6a6a6a"/><path d="M7.2 8.5l.5 -2.3l5.5 -5.5l1.8 1.8l-5.5 5.5z" fill="#6a6a6a"/></svg>
<svg class="b" style="left:374.5px;top:369px;" width="13" height="14" viewBox="0 0 13 14"><path d="M3.5 .5h9v10.5h-9z" fill="#6a6a6a"/><path d="M1 3v10.5h8.5" fill="none" stroke="#6a6a6a" stroke-width="1.6"/></svg>
<svg class="b" style="left:396.5px;top:368.5px;" width="15" height="15" viewBox="0 0 15 15"><circle cx="7.5" cy="7.5" r="7.2" fill="#727272"/><path d="M4.5 4.5l6 6M10.5 4.5l-6 6" stroke="#fff" stroke-width="2.5"/></svg>
<div class="b" style="left:176.3px;top:413.2px;width:301.7px;height:37.4px;background:#e4eff5;border:1px solid #cbcbcb;border-radius:2px;"></div>
<div class="b" style="left:176.3px;top:413.2px;width:38.9px;height:37.4px;background:#d9d9d9;border:1px solid #cbcbcb;border-radius:2px;"></div>
<svg class="b" style="left:188.75px;top:424.9px;" width="14" height="14" viewBox="0 0 14 14"><path d="M0 2.5h14M0 7h14M0 11.5h14" stroke="#fff" stroke-width="2.4"/></svg>
<svg class="b" style="left:147.2px;top:423px;" width="18" height="18" viewBox="0 0 18 18"><circle cx="9" cy="9" r="7.8" fill="#fff" stroke="#333" stroke-width="1.1"/><path d="M5 9h8" stroke="#777" stroke-width="1.3"/></svg>
<svg class="b" style="left:228px;top:423.6px;" width="13" height="12" viewBox="0 0 13 12"><path d="M4.5 2h8M4.5 6h8M4.5 10h8" stroke="#666" stroke-width="1.1"/><path d="M1 .5v3M.5 5h1.5l-1.5 2h1.5M.5 8.5h1.5v3h-1.5M1 10h1" stroke="#666" stroke-width=".7" fill="none"/></svg>
<span class="t" style="letter-spacing:-0.209px;left:333.5px;top:423px;height:16px;line-height:16px;font-size:11px;color:#7a8288;">LIST-OL</span>
<svg class="b" style="left:384.25px;top:423.55px;" width="15.5" height="15.5" viewBox="0 0 15.5 15.5"><path d="M.5 2.8h9.7l-3.9 3.9v2.6h2.6l3.6 -3.6v9.8h-12z" fill="#6a6a6a"/><path d="M7.2 8.5l.5 -2.3l5.5 -5.5l1.8 1.8l-5.5 5.5z" fill="#6a6a6a"/></svg>
<svg class="b" style="left:407.5px;top:425px;" width="13" height="14" viewBox="0 0 13 14"><path d="M3.5 .5h9v10.5h-9z" fill="#6a6a6a"/><path d="M1 3v10.5h8.5" fill="none" stroke="#6a6a6a" stroke-width="1.6"/></svg>
<svg class="b" style="left:429.5px;top:424.5px;" width="15" height="15" viewBox="0 0 15 15"><circle cx="7.5" cy="7.5" r="7.2" fill="#727272"/><path d="M4.5 4.5l6 6M10.5 4.5l-6 6" stroke="#fff" stroke-width="2.5"/></svg>
<svg class="b" style="left:452.6px;top:428px;" width="14" height="8" viewBox="0 0 14 8"><path d="M1 1.2l6 5l6 -5" fill="none" stroke="#6a6a6a" stroke-width="1.6"/></svg>
<div class="b" style="left:216.1px;top:469.3px;width:295.9px;height:37.4px;background:#e4eff5;border:1px solid #cbcbcb;border-radius:2px;"></div>
<div class="b" style="left:216.1px;top:469.3px;width:38.9px;height:37.4px;background:#d9d9d9;border:1px solid #cbcbcb;border-radius:2px;"></div>
<svg class="b" style="left:228.55px;top:481px;" width="14" height="14" viewBox="0 0 14 14"><path d="M0 2.5h14M0 7h14M0 11.5h14" stroke="#fff" stroke-width="2.4"/></svg>
<svg class="b" style="left:187px;top:478.8px;" width="18" height="18" viewBox="0 0 18 18"><circle cx="9" cy="9" r="7.8" fill="#fff" stroke="#333" stroke-width="1.1"/><path d="M5 9h8" stroke="#777" stroke-width="1.3"/></svg>
<svg class="b" style="left:267.5px;top:479.8px;" width="13" height="12" viewBox="0 0 13 12"><path d="M4.5 2h8M4.5 6h8M4.5 10h8" stroke="#666" stroke-width="1.1"/><circle cx="1.3" cy="2" r="1" fill="#666"/><circle cx="1.3" cy="6" r="1" fill="#666"/><circle cx="1.3" cy="10" r="1" fill="#666"/></svg>
<span class="t" style="letter-spacing:-0.294px;left:373.6px;top:478.8px;height:16px;line-height:16px;font-size:11px;color:#7a8288;">LIST-LI</span>
<svg class="b" style="left:417.95px;top:479.35px;" width="15.5" height="15.5" viewBox="0 0 15.5 15.5"><path d="M.5 2.8h9.7l-3.9 3.9v2.6h2.6l3.6 -3.6v9.8h-12z" fill="#6a6a6a"/><path d="M7.2 8.5l.5 -2.3l5.5 -5.5l1.8 1.8l-5.5 5.5z" fill="#6a6a6a"/></svg>
<svg class="b" style="left:441.5px;top:480.8px;" width="13" height="14" viewBox="0 0 13 14"><path d="M3.5 .5h9v10.5h-9z" fill="#6a6a6a"/><path d="M1 3v10.5h8.5" fill="none" stroke="#6a6a6a" stroke-width="1.6"/></svg>
<svg class="b" style="left:463.2px;top:480.3px;" width="15" height="15" viewBox="0 0 15 15"><circle cx="7.5" cy="7.5" r="7.2" fill="#727272"/><path d="M4.5 4.5l6 6M10.5 4.5l-6 6" stroke="#fff" stroke-width="2.5"/></svg>
<svg class="b" style="left:486.5px;top:483.8px;" width="14" height="8" viewBox="0 0 14 8"><path d="M1 1.2l6 5l6 -5" fill="none" stroke="#6a6a6a" stroke-width="1.6"/></svg>
<div class="b" style="left:216.1px;top:581.5px;width:295.9px;height:37.4px;background:#e4eff5;border:1px solid #cbcbcb;border-radius:2px;"></div>
<div class="b" style="left:216.1px;top:581.5px;width:38.9px;height:37.4px;background:#d9d9d9;border:1px solid #cbcbcb;border-radius:2px;"></div>
<svg class="b" style="left:228.55px;top:593.2px;" width="14" height="14" viewBox="0 0 14 14"><path d="M0 2.5h14M0 7h14M0 11.5h14" stroke="#fff" stroke-width="2.4"/></svg>
<svg class="b" style="left:187px;top:591px;" width="18" height="18" viewBox="0 0 18 18"><circle cx="9" cy="9" r="7.8" fill="#fff" stroke="#333" stroke-width="1.1"/><path d="M5 9h8" stroke="#777" stroke-width="1.3"/></svg>
<svg class="b" style="left:267.5px;top:592px;" width="13" height="12" viewBox="0 0 13 12"><path d="M4.5 2h8M4.5 6h8M4.5 10h8" stroke="#666" stroke-width="1.1"/><circle cx="1.3" cy="2" r="1" fill="#666"/><circle cx="1.3" cy="6" r="1" fill="#666"/><circle cx="1.3" cy="10" r="1" fill="#666"/></svg>
<span class="t" style="letter-spacing:-0.294px;left:373.6px;top:591px;height:16px;line-height:16px;font-size:11px;color:#7a8288;">LIST-LI</span>
<svg class="b" style="left:417.95px;top:591.55px;" width="15.5" height="15.5" viewBox="0 0 15.5 15.5"><path d="M.5 2.8h9.7l-3.9 3.9v2.6h2.6l3.6 -3.6v9.8h-12z" fill="#6a6a6a"/><path d="M7.2 8.5l.5 -2.3l5.5 -5.5l1.8 1.8l-5.5 5.5z" fill="#6a6a6a"/></svg>
<svg class="b" style="left:441.5px;top:593px;" width="13" height="14" viewBox="0 0 13 14"><path d="M3.5 .5h9v10.5h-9z" fill="#6a6a6a"/><path d="M1 3v10.5h8.5" fill="none" stroke="#6a6a6a" stroke-width="1.6"/></svg>
<svg class="b" style="left:463.2px;top:592.5px;" width="15" height="15" viewBox="0 0 15 15"><circle cx="7.5" cy="7.5" r="7.2" fill="#727272"/><path d="M4.5 4.5l6 6M10.5 4.5l-6 6" stroke="#fff" stroke-width="2.5"/></svg>
<svg class="b" style="left:486.5px;top:596px;" width="14" height="8" viewBox="0 0 14 8"><path d="M1 1.2l6 5l6 -5" fill="none" stroke="#6a6a6a" stroke-width="1.6"/></svg>
<div class="b" style="left:216.1px;top:693.7px;width:295.9px;height:37.4px;background:#e4eff5;border:1px solid #cbcbcb;border-radius:2px;"></div>
<div class="b" style="left:216.1px;top:693.7px;width:38.9px;height:37.4px;background:#d9d9d9;border:1px solid #cbcbcb;border-radius:2px;"></div>
<svg class="b" style="left:228.55px;top:705.4px;" width="14" height="14" viewBox="0 0 14 14"><path d="M0 2.5h14M0 7h14M0 11.5h14" stroke="#fff" stroke-width="2.4"/></svg>
<svg class="b" style="left:187px;top:703.2px;" width="18" height="18" viewBox="0 0 18 18"><circle cx="9" cy="9" r="7.8" fill="#fff" stroke="#333" stroke-width="1.1"/><path d="M5 9h8" stroke="#777" stroke-width="1.3"/></svg>
<svg class="b" style="left:267.5px;top:704.2px;" width="13" height="12" viewBox="0 0 13 12"><path d="M4.5 2h8M4.5 6h8M4.5 10h8" stroke="#666" stroke-width="1.1"/><circle cx="1.3" cy="2" r="1" fill="#666"/><circle cx="1.3" cy="6" r="1" fill="#666"/><circle cx="1.3" cy="10" r="1" fill="#666"/></svg>
<span class="t" style="letter-spacing:-0.294px;left:373.6px;top:703.2px;height:16px;line-height:16px;font-size:11px;color:#7a8288;">LIST-LI</span>
<svg class="b" style="left:417.95px;top:703.75px;" width="15.5" height="15.5" viewBox="0 0 15.5 15.5"><path d="M.5 2.8h9.7l-3.9 3.9v2.6h2.6l3.6 -3.6v9.8h-12z" fill="#6a6a6a"/><path d="M7.2 8.5l.5 -2.3l5.5 -5.5l1.8 1.8l-5.5 5.5z" fill="#6a6a6a"/></svg>
<svg class="b" style="left:441.5px;top:705.2px;" width="13" height="14" viewBox="0 0 13 14"><path d="M3.5 .5h9v10.5h-9z" fill="#6a6a6a"/><path d="M1 3v10.5h8.5" fill="none" stroke="#6a6a6a" stroke-width="1.6"/></svg>
<svg class="b" style="left:463.2px;top:704.7px;" width="15" height="15" viewBox="0 0 15 15"><circle cx="7.5" cy="7.5" r="7.2" fill="#727272"/><path d="M4.5 4.5l6 6M10.5 4.5l-6 6" stroke="#fff" stroke-width="2.5"/></svg>
<svg class="b" style="left:486.5px;top:708.2px;" width="14" height="8" viewBox="0 0 14 8"><path d="M1 1.2l6 5l6 -5" fill="none" stroke="#6a6a6a" stroke-width="1.6"/></svg>
<div class="b" style="left:216.1px;top:805.9px;width:295.9px;height:37.4px;background:#e4eff5;border:1px solid #cbcbcb;border-radius:2px;"></div>
<div class="b" style="left:216.1px;top:805.9px;width:38.9px;height:37.4px;background:#d9d9d9;border:1px solid #cbcbcb;border-radius:2px;"></div>
<svg class="b" style="left:228.55px;top:817.6px;" width="14" height="14" viewBox="0 0 14 14"><path d="M0 2.5h14M0 7h14M0 11.5h14" stroke="#fff" stroke-width="2.4"/></svg>
<svg class="b" style="left:187px;top:815.4px;" width="18" height="18" viewBox="0 0 18 18"><circle cx="9" cy="9" r="7.8" fill="#fff" stroke="#333" stroke-width="1.1"/><path d="M5 9h8" stroke="#777" stroke-width="1.3"/></svg>
<svg class="b" style="left:267.5px;top:816.4px;" width="13" height="12" viewBox="0 0 13 12"><path d="M4.5 2h8M4.5 6h8M4.5 10h8" stroke="#666" stroke-width="1.1"/><circle cx="1.3" cy="2" r="1" fill="#666"/><circle cx="1.3" cy="6" r="1" fill="#666"/><circle cx="1.3" cy="10" r="1" fill="#666"/></svg>
<span class="t" style="letter-spacing:-0.294px;left:373.6px;top:815.4px;height:16px;line-height:16px;font-size:11px;color:#7a8288;">LIST-LI</span>
<svg class="b" style="left:417.95px;top:815.95px;" width="15.5" height="15.5" viewBox="0 0 15.5 15.5"><path d="M.5 2.8h9.7l-3.9 3.9v2.6h2.6l3.6 -3.6v9.8h-12z" fill="#6a6a6a"/><path d="M7.2 8.5l.5 -2.3l5.5 -5.5l1.8 1.8l-5.5 5.5z" fill="#6a6a6a"/></svg>
<svg class="b" style="left:441.5px;top:817.4px;" width="13" height="14" viewBox="0 0 13 14"><path d="M3.5 .5h9v10.5h-9z" fill="#6a6a6a"/><path d="M1 3v10.5h8.5" fill="none" stroke="#6a6a6a" stroke-width="1.6"/></svg>
<svg class="b" style="left:463.2px;top:816.9px;" width="15" height="15" viewBox="0 0 15 15"><circle cx="7.5" cy="7.5" r="7.2" fill="#727272"/><path d="M4.5 4.5l6 6M10.5 4.5l-6 6" stroke="#fff" stroke-width="2.5"/></svg>
<svg class="b" style="left:486.5px;top:820.4px;" width="14" height="8" viewBox="0 0 14 8"><path d="M1 1.2l6 5l6 -5" fill="none" stroke="#6a6a6a" stroke-width="1.6"/></svg>
<div class="b" style="left:256.1px;top:525.4px;width:378.4px;height:37.4px;background:#bfe0bb;border:1.5px solid #86b886;box-shadow:0 0 2px rgba(90,140,90,.5);border-radius:2px;"></div>
<div class="b" style="left:256.1px;top:525.4px;width:38.9px;height:37.4px;background:#aeaeae;border:1.5px solid #86b886;border-radius:2px;"></div>
<svg class="b" style="left:268.55px;top:537.1px;" width="14" height="14" viewBox="0 0 14 14"><path d="M0 2.5h14M0 7h14M0 11.5h14" stroke="#fff" stroke-width="2.4"/></svg>
<span class="t" style="letter-spacing:0.335px;left:305px;top:536.9px;height:16px;line-height:16px;font-size:9px;color:#666;font-weight:700;">A-Z</span>
<span class="t" style="letter-spacing:-0.011px;left:331.6px;top:535.9px;height:16px;line-height:16px;font-size:11.6px;color:#444;">Name</span>
<div class="b" style="left:413px;top:534.4px;width:116.5px;height:20px;border:1px solid #858585;border-radius:3px;background:rgba(255,255,255,.2);"></div>
<span class="t" style="letter-spacing:-0.94px;left:421px;top:537.2px;height:16px;line-height:16px;font-size:13.6px;color:#333;">TEXT</span>
<svg class="b" style="left:511.5px;top:539.4px;" width="11" height="8" viewBox="0 0 11 8"><path d="M1 1.2l4.5 5l4.5 -5" fill="none" stroke="#333" stroke-width="1.4"/></svg>
<svg class="b" style="left:539.25px;top:535.45px;" width="15.5" height="15.5" viewBox="0 0 15.5 15.5"><path d="M.5 2.8h9.7l-3.9 3.9v2.6h2.6l3.6 -3.6v9.8h-12z" fill="#6a6a6a"/><path d="M7.2 8.5l.5 -2.3l5.5 -5.5l1.8 1.8l-5.5 5.5z" fill="#6a6a6a"/></svg>
<svg class="b" style="left:563.5px;top:536.9px;" width="13" height="14" viewBox="0 0 13 14"><path d="M3.5 .5h9v10.5h-9z" fill="#6a6a6a"/><path d="M1 3v10.5h8.5" fill="none" stroke="#6a6a6a" stroke-width="1.6"/></svg>
<svg class="b" style="left:585px;top:536.4px;" width="15" height="15" viewBox="0 0 15 15"><circle cx="7.5" cy="7.5" r="7.2" fill="#727272"/><path d="M4.5 4.5l6 6M10.5 4.5l-6 6" stroke="#fff" stroke-width="2.5"/></svg>
<svg class="b" style="left:608px;top:539.9px;" width="14" height="8" viewBox="0 0 14 8"><path d="M1 1.2l6 5l6 -5" fill="none" stroke="#6a6a6a" stroke-width="1.6"/></svg>
<div class="b" style="left:256.1px;top:637.6px;width:378.4px;height:37.4px;background:#c9f2b1;border:1px solid #bcc6b4;border-radius:2px;"></div>
<div class="b" style="left:256.1px;top:637.6px;width:38.9px;height:37.4px;background:#d9d9d9;border:1px solid #cbcbcb;border-radius:2px;"></div>
<svg class="b" style="left:268.55px;top:649.3px;" width="14" height="14" viewBox="0 0 14 14"><path d="M0 2.5h14M0 7h14M0 11.5h14" stroke="#fff" stroke-width="2.4"/></svg>
<svg class="b" style="left:306px;top:652.6px;" width="14" height="10" viewBox="0 0 14 10"><rect x=".6" y=".6" width="12.8" height="8.8" rx="1" fill="none" stroke="#555" stroke-width="1.1"/><path d="M2.5 2.8l4.5 3l4.5 -3M2.5 7.5l2.8 -2M11.5 7.5l-2.8 -2" fill="none" stroke="#555" stroke-width=".9"/></svg>
<span class="t" style="letter-spacing:-0.261px;left:331.6px;top:648.1px;height:16px;line-height:16px;font-size:11.6px;color:#444;">Email</span>
<div class="b" style="left:413px;top:646.6px;width:116.5px;height:20px;border:1px solid #858585;border-radius:3px;background:rgba(255,255,255,.2);"></div>
<span class="t" style="letter-spacing:-0.051px;left:421px;top:649.4px;height:16px;line-height:16px;font-size:13.6px;color:#333;">EMAIL*</span>
<svg class="b" style="left:511.5px;top:651.6px;" width="11" height="8" viewBox="0 0 11 8"><path d="M1 1.2l4.5 5l4.5 -5" fill="none" stroke="#333" stroke-width="1.4"/></svg>
<svg class="b" style="left:539.25px;top:647.65px;" width="15.5" height="15.5" viewBox="0 0 15.5 15.5"><path d="M.5 2.8h9.7l-3.9 3.9v2.6h2.6l3.6 -3.6v9.8h-12z" fill="#6a6a6a"/><path d="M7.2 8.5l.5 -2.3l5.5 -5.5l1.8 1.8l-5.5 5.5z" fill="#6a6a6a"/></svg>
<svg class="b" style="left:563.5px;top:649.1px;" width="13" height="14" viewBox="0 0 13 14"><path d="M3.5 .5h9v10.5h-9z" fill="#6a6a6a"/><path d="M1 3v10.5h8.5" fill="none" stroke="#6a6a6a" stroke-width="1.6"/></svg>
<svg class="b" style="left:585px;top:648.6px;" width="15" height="15" viewBox="0 0 15 15"><circle cx="7.5" cy="7.5" r="7.2" fill="#727272"/><path d="M4.5 4.5l6 6M10.5 4.5l-6 6" stroke="#fff" stroke-width="2.5"/></svg>
<svg class="b" style="left:608px;top:652.1px;" width="14" height="8" viewBox="0 0 14 8"><path d="M1 1.2l6 5l6 -5" fill="none" stroke="#6a6a6a" stroke-width="1.6"/></svg>
<div class="b" style="left:256.1px;top:749.8px;width:378.4px;height:37.4px;background:#c9f2b1;border:1px solid #bcc6b4;border-radius:2px;"></div>
<div class="b" style="left:256.1px;top:749.8px;width:38.9px;height:37.4px;background:#d9d9d9;border:1px solid #cbcbcb;border-radius:2px;"></div>
<svg class="b" style="left:268.55px;top:761.5px;" width="14" height="14" viewBox="0 0 14 14"><path d="M0 2.5h14M0 7h14M0 11.5h14" stroke="#fff" stroke-width="2.4"/></svg>
<svg class="b" style="left:306.5px;top:762.3px;" width="14" height="13" viewBox="0 0 14 13"><path d="M2.2 11c3.8 .6 7.8 -2.6 8.3 -6.8" fill="none" stroke="#666" stroke-width="2.1"/><path d="M1.6 10.2l2.6 -1.2l.8 2.6l-2.6 1zM8.6 4.2l1.2 -2.6l2.6 .8l-1 2.6z" fill="#666"/><path d="M11.5 .5c1.2 .3 2 1.2 2.2 2.4" stroke="#666" stroke-width=".9" fill="none"/></svg>
<span class="t" style="letter-spacing:-0.229px;left:331.6px;top:760.3px;height:16px;line-height:16px;font-size:11.6px;color:#444;">Phone</span>
<div class="b" style="left:413px;top:758.8px;width:116.5px;height:20px;border:1px solid #858585;border-radius:3px;background:rgba(255,255,255,.2);"></div>
<span class="t" style="letter-spacing:-1.314px;left:421px;top:761.6px;height:16px;line-height:16px;font-size:13.6px;color:#333;">TEL</span>
<svg class="b" style="left:511.5px;top:763.8px;" width="11" height="8" viewBox="0 0 11 8"><path d="M1 1.2l4.5 5l4.5 -5" fill="none" stroke="#333" stroke-width="1.4"/></svg>
<svg class="b" style="left:539.25px;top:759.85px;" width="15.5" height="15.5" viewBox="0 0 15.5 15.5"><path d="M.5 2.8h9.7l-3.9 3.9v2.6h2.6l3.6 -3.6v9.8h-12z" fill="#6a6a6a"/><path d="M7.2 8.5l.5 -2.3l5.5 -5.5l1.8 1.8l-5.5 5.5z" fill="#6a6a6a"/></svg>
<svg class="b" style="left:563.5px;top:761.3px;" width="13" height="14" viewBox="0 0 13 14"><path d="M3.5 .5h9v10.5h-9z" fill="#6a6a6a"/><path d="M1 3v10.5h8.5" fill="none" stroke="#6a6a6a" stroke-width="1.6"/></svg>
<svg class="b" style="left:585px;top:760.8px;" width="15" height="15" viewBox="0 0 15 15"><circle cx="7.5" cy="7.5" r="7.2" fill="#727272"/><path d="M4.5 4.5l6 6M10.5 4.5l-6 6" stroke="#fff" stroke-width="2.5"/></svg>
<svg class="b" style="left:608px;top:764.3px;" width="14" height="8" viewBox="0 0 14 8"><path d="M1 1.2l6 5l6 -5" fill="none" stroke="#6a6a6a" stroke-width="1.6"/></svg>
<div class="b" style="left:716px;top:252px;width:262px;height:489.8px;background:#fff;"></div>
<div class="b" style="left:730px;top:280px;width:209.5px;height:30px;background:#fff;border:1px solid #8c8f94;border-radius:3px;"></div>
<span class="t" style="left:738px;top:286.5px;height:16px;line-height:16px;font-size:13.6px;color:#2c3338;">TEXT (SHORT TEXT)</span>
<div class="b" style="left:730px;top:325.4px;width:233.7px;height:32.8px;background:#a0c6e8;"></div>
<span class="t" style="letter-spacing:-0.051px;left:731px;top:336.3px;height:16px;line-height:16px;font-size:11.6px;color:#4d7499;-webkit-text-stroke:.32px;">Field Type</span>
<div class="b" style="left:812px;top:333.5px;width:14.7px;height:14.5px;border:1px solid #7b9dbf;border-radius:3px;background:#a9cbea;"></div>
<span class="t" style="letter-spacing:-0.147px;left:833.8px;top:333px;height:16px;line-height:16px;font-size:11.6px;color:#6d93b8;">Required</span>
<div class="b" style="left:729.5px;top:292.4px;width:226.5px;height:25.5px;background:#fff;border-radius:3px;box-shadow:0 1px 5px rgba(0,0,0,.35)"></div>
<div class="b" style="left:740.4px;top:312px;width:12px;height:12px;background:#fff;transform:rotate(45deg) scale(.9,.9);box-shadow:2px 2px 3px rgba(0,0,0,.18)"></div>
<div class="b" style="left:735px;top:306px;width:25px;height:12px;background:#fff;"></div>
<svg class="b" style="left:739.4px;top:299px;" width="12" height="12" viewBox="0 0 12 12"><rect x=".7" y=".7" width="4" height="3" fill="none" stroke="#4f7fd9" stroke-width="1.2"/><rect x="7.3" y=".7" width="4" height="3" fill="none" stroke="#4f7fd9" stroke-width="1.2"/><rect x=".7" y="6.3" width="4" height="5" fill="none" stroke="#4f7fd9" stroke-width="1.2"/><rect x="7.3" y="6.3" width="4" height="5" fill="none" stroke="#4f7fd9" stroke-width="1.2"/></svg>
<span class="t" style="letter-spacing:-0.078px;left:761.6px;top:297px;height:16px;line-height:16px;font-size:11.3px;font-weight:700;"><span style="color:#881280">div</span><span style="color:#1a1aa6">.attribute___2PJGD</span></span>
<span class="t" style="letter-spacing:0.008px;left:889px;top:297.5px;height:16px;line-height:16px;font-size:11px;color:#777;">258.55 × 37</span>
<span class="t" style="letter-spacing:0.064px;left:730.8px;top:370px;height:16px;line-height:16px;font-size:11.6px;color:#1d2327;-webkit-text-stroke:.32px;">Name</span>
<div class="b" style="left:813px;top:365.3px;width:151.7px;height:26.3px;background:#fff;border:1px solid #8c8f94;border-radius:4px;"></div>
<span class="t" style="letter-spacing:0.161px;left:821.3px;top:370.95px;height:16px;line-height:16px;font-size:11.6px;color:#2c3338;">text-900</span>
<span class="t" style="letter-spacing:-0.157px;left:730.8px;top:410px;height:16px;line-height:16px;font-size:11.6px;color:#1d2327;-webkit-text-stroke:.32px;">Label</span>
<div class="b" style="left:813px;top:405px;width:151.7px;height:26.5px;background:#fff;border:1px solid #8c8f94;border-radius:4px;"></div>
<span class="t" style="letter-spacing:0.014px;left:821.3px;top:410.75px;height:16px;line-height:16px;font-size:11.6px;color:#2c3338;">Name</span>
<span class="t" style="letter-spacing:0.052px;left:730.8px;top:449.8px;height:16px;line-height:16px;font-size:11.6px;color:#1d2327;-webkit-text-stroke:.32px;">Label Position</span>
<div class="b" style="left:813px;top:444px;width:78.5px;height:30.7px;background:#fff;border:1px solid #8c8f94;border-radius:4px;"></div>
<span class="t" style="letter-spacing:0.087px;left:821.6px;top:452.5px;height:16px;line-height:16px;font-size:14.2px;color:#2c3338;">Default</span>
<svg class="b" style="left:874px;top:456.5px;" width="10" height="8" viewBox="0 0 10 8"><path d="M1 1.2l4 5l4 -5" fill="none" stroke="#333" stroke-width="1.3"/></svg>
<span class="t" style="letter-spacing:0.109px;left:730.8px;top:493px;height:16px;line-height:16px;font-size:11.6px;color:#1d2327;-webkit-text-stroke:.32px;">Default Value</span>
<div class="b" style="left:813px;top:488px;width:151.7px;height:26.5px;background:#fff;border:1px solid #8c8f94;border-radius:4px;"></div>
<div class="b" style="left:812px;top:533px;width:14.7px;height:14.5px;background:#fff;border:1px solid #8c8f94;border-radius:3px;"></div>
<span class="t" style="letter-spacing:-0.072px;left:833.8px;top:532.8px;height:16px;line-height:16px;font-size:11.6px;color:#3c434a;">Use this text as the</span>
<span class="t" style="letter-spacing:0.136px;left:812px;top:550.7px;height:16px;line-height:16px;font-size:11.6px;color:#3c434a;">placeholder of the field</span>
<span class="t" style="letter-spacing:0.193px;left:730.8px;top:580px;height:16px;line-height:16px;font-size:11.6px;color:#1d2327;-webkit-text-stroke:.32px;">Akismet</span>
<div class="b" style="left:812px;top:582px;width:14.7px;height:14.5px;background:#fff;border:1px solid #8c8f94;border-radius:3px;"></div>
<span class="t" style="letter-spacing:-0.04px;left:833.8px;top:581.7px;height:16px;line-height:16px;font-size:11.6px;color:#3c434a;">This field requires</span>
<span class="t" style="letter-spacing:0.05px;left:812px;top:599.6px;height:16px;line-height:16px;font-size:11.6px;color:#3c434a;">author's name</span>
<span class="t" style="letter-spacing:0.479px;left:730.8px;top:633px;height:16px;line-height:16px;font-size:11.6px;color:#1d2327;-webkit-text-stroke:.32px;">Id Attribute</span>
<div class="b" style="left:813px;top:628.3px;width:151.7px;height:26.3px;background:#fff;border:1px solid #8c8f94;border-radius:4px;"></div>
<span class="t" style="letter-spacing:0.161px;left:730.8px;top:672.6px;height:16px;line-height:16px;font-size:11.6px;color:#1d2327;-webkit-text-stroke:.32px;">Class Attribute</span>
<div class="b" style="left:813px;top:668px;width:151.7px;height:26.4px;background:#fff;border:1px solid #8c8f94;border-radius:4px;"></div>
<div class="b" style="left:730px;top:701px;width:48px;height:27px;background:#2271b1;border-radius:3px;border:1px solid #1b64a0;"></div>
<span class="t" style="letter-spacing:0.067px;left:740.3px;top:707px;height:16px;line-height:16px;font-size:11.6px;color:#fff;">Done</span>
<div class="b" style="left:716px;top:760px;width:262px;height:93px;background:#fff;"></div>
<span class="t" style="letter-spacing:-0.532px;left:730.8px;top:787px;height:16px;line-height:16px;font-size:14.6px;color:#1d2327;-webkit-text-stroke:.32px;">FIELDS (CF7 TAGS)</span>
<div class="b" style="left:935px;top:784px;width:28.7px;height:19.4px;background:#d2d2d2;border-radius:2px;"></div>
<span class="t" style="left:946.5px;top:786px;height:16px;line-height:16px;font-size:10.5px;color:#f4f4f4;font-weight:700;">?</span>
<div class="b" style="left:730.5px;top:823px;width:107.5px;height:33px;background:#fff;border:1px solid #d9d9d9;border-radius:2px;box-shadow:inset 0 0 0 1px #f4f4f4;"></div>
<svg class="b" style="left:740.7px;top:835px;" width="12" height="14" viewBox="0 0 12 14"><path d="M2 13l1.5 -3c-1 -1.5 -1 -4 1 -6c1.5 -1.5 3 -2.5 4.5 -3l.5 2.5c1.5 1.5 2 4.5 0 6.5c-1.5 1.5 -3.5 1.5 -5 .5z" fill="none" stroke="#2271b1" stroke-width="1.1"/><text x="7" y="9" font-size="5" fill="#2271b1" text-anchor="middle" font-family="Liberation Sans,sans-serif">$</text></svg>
<span class="t" style="letter-spacing:-0.122px;left:768.6px;top:834px;height:16px;line-height:16px;font-size:11.6px;color:#2c3338;">Acceptance</span>
<div class="b" style="left:857px;top:823px;width:106.5px;height:33px;background:#fff;border:1px solid #d9d9d9;border-radius:2px;box-shadow:inset 0 0 0 1px #f4f4f4;"></div>
<svg class="b" style="left:866px;top:836px;" width="12" height="12" viewBox="0 0 12 12"><path d="M10 6.5v4h-8.5v-8.5h5" fill="none" stroke="#2271b1" stroke-width="1.5"/><path d="M4 5.5l2.2 2.2l4.8 -5.2" fill="none" stroke="#2271b1" stroke-width="1.5"/></svg>
<span class="t" style="letter-spacing:-0.098px;left:894px;top:834px;height:16px;line-height:16px;font-size:11.6px;color:#2c3338;">Checkbox</span>
<div class="b" style="left:1014.5px;top:101px;width:15.5px;height:751.5px;background:#f1f1f1;"></div>
<div class="b" style="left:1016.5px;top:343px;width:11.5px;height:220.8px;background:#c1c1c1;"></div>
<svg class="b" style="left:1018.25px;top:107.25px;" width="7.5" height="4.5" viewBox="0 0 8 5"><path d="M0 5L4 0.5L8 5z" fill="#505050"/></svg>
<svg class="b" style="left:1018.25px;top:841.75px;" width="7.5" height="4.5" viewBox="0 0 8 5"><path d="M0 0L4 4.5L8 0z" fill="#505050"/></svg>
<div class="b" style="left:7px;top:101px;width:1008px;height:29px;background:#1d2327;"></div>
<div class="b" style="left:7px;top:130px;width:33px;height:722.5px;background:#1d2327;"></div>
<svg class="b" style="left:12.5px;top:106px;" width="19" height="19" viewBox="0 0 19 19"><circle cx="9.5" cy="9.5" r="9" fill="#a7aaad"/><circle cx="9.5" cy="9.5" r="7.7" fill="none" stroke="#1d2327" stroke-width=".9"/><text x="9.5" y="14.2" font-size="13.5" font-weight="700" font-family="Liberation Serif,serif" text-anchor="middle" fill="#1d2327">W</text></svg>
<svg class="b" style="left:46.2px;top:108.5px;" width="15" height="14" viewBox="0 0 15 14"><path d="M7.5 .8L.3 7.5h2v6h3.9v-4h2.6v4h3.9v-6h2z" fill="#a7aaad"/><rect x="10.5" y="1.5" width="2" height="3.5" fill="#a7aaad"/></svg>
<span class="t" style="letter-spacing:-0.142px;left:68.4px;top:108px;height:16px;line-height:16px;font-size:11.6px;color:#f0f0f1;">CF7 Skins Development</span>
<svg class="b" style="left:205.2px;top:109.5px;" width="15" height="13" viewBox="0 0 15 13"><path d="M2.2 7.5a5.3 5.3 0 0 1 9 -3.7M12.8 5.5a5.3 5.3 0 0 1 -9 3.7" fill="none" stroke="#a7aaad" stroke-width="2.2"/><path d="M12.5 .5v5h-5zM2.5 12.5v-5h5z" fill="#a7aaad"/></svg>
<span class="t" style="letter-spacing:-0.452px;left:228px;top:108px;height:16px;line-height:16px;font-size:11.6px;color:#f0f0f1;">2</span>
<svg class="b" style="left:249.2px;top:110px;" width="13" height="13" viewBox="0 0 13 13"><path d="M1 1h11v8h-6l-3 3.5v-3.5h-2z" fill="#a7aaad"/></svg>
<span class="t" style="letter-spacing:0.048px;left:271px;top:108px;height:16px;line-height:16px;font-size:11.6px;color:#a7aaad;">0</span>
<svg class="b" style="left:294px;top:110px;" width="12" height="12" viewBox="0 0 12 12"><path d="M6 .5v11M.5 6h11" stroke="#a7aaad" stroke-width="2.6"/></svg>
<span class="t" style="letter-spacing:-0.002px;left:314.6px;top:108px;height:16px;line-height:16px;font-size:11.6px;color:#f0f0f1;">New</span>
<span class="t" style="letter-spacing:0.014px;left:827.4px;top:108px;height:16px;line-height:16px;font-size:11.6px;color:#f0f0f1;">Developer</span>
<span class="t" style="letter-spacing:0.105px;left:893.9px;top:108px;height:16px;line-height:16px;font-size:11.6px;color:#f0f0f1;">Howdy, buzztone</span>
<svg class="b" style="left:991px;top:108px;" width="14" height="15" viewBox="0 0 14 15"><circle cx="7" cy="4.5" r="3.5" fill="#a7aaad"/><path d="M.5 14.5c0 -5 2.5 -6 6.5 -6s6.5 1 6.5 6z" fill="#a7aaad"/></svg>
<div class="b" style="left:7px;top:304.5px;width:33px;height:30.5px;background:#2271b1;"></div>
<svg class="b" style="left:36px;top:315.5px;" width="4" height="9" viewBox="0 0 4 9"><path d="M4 0L0 4.5L4 9z" fill="#f0f0f1"/></svg>
<svg class="b" style="left:14.9px;top:149px;" width="16" height="13" viewBox="0 0 16 13"><path d="M2.3 12.8A7.2 7.2 0 1 1 13.7 12.8z" fill="#a7aaad"/><path d="M8 9.5l2.5 -5" stroke="#1d2327" stroke-width="1.6"/><circle cx="4" cy="7" r=".9" fill="#1d2327"/><circle cx="6" cy="4" r=".9" fill="#1d2327"/><circle cx="12.3" cy="7.5" r=".9" fill="#1d2327"/></svg>
<svg class="b" style="left:14.15px;top:187.25px;" width="17.5" height="17.5" viewBox="0 0 16 16"><path d="M9.5 1l5.5 5.5l-1.5 1l-1 -.5l-2.5 2.5l.5 3l-1.5 1.5l-3 -3.5l-4.5 4.5l-.5 -.5l4.5 -4.5l-3.5 -3l1.5 -1.5l3 .5l2.5 -2.5l-.5 -1z" fill="#a7aaad"/></svg>
<svg class="b" style="left:13.65px;top:218.25px;" width="18.5" height="17.5" viewBox="0 0 17 16"><path d="M1 1.5h3l1 -1.5h3l1 1.5h1v6.5h-9z" fill="#a7aaad"/><circle cx="5.5" cy="4.8" r="1.8" fill="#1d2327"/><path d="M10.5 6.5l5.5 -1v7.5a1.8 1.5 0 1 1 -1.3 -1.5v-3.5l-3 .6v5.4a1.8 1.5 0 1 1 -1.2 -1.5z" fill="#a7aaad"/></svg>
<svg class="b" style="left:14.9px;top:250.5px;" width="15" height="15" viewBox="0 0 15 15"><path d="M4.5 .5h10v11h-10z" fill="#a7aaad"/><path d="M2.5 3.5v10h9" fill="none" stroke="#a7aaad" stroke-width="1.4"/><path d="M.7 5.5v9.5h9" fill="none" stroke="#a7aaad" stroke-width="1.2"/></svg>
<svg class="b" style="left:15.4px;top:281.5px;" width="15" height="15" viewBox="0 0 14 14"><path d="M1 1h12v8.5h-6.5l-3.5 4v-4h-2z" fill="#a7aaad"/></svg>
<svg class="b" style="left:14.4px;top:314px;" width="17" height="12" viewBox="0 0 17 12"><rect x=".5" y=".5" width="16" height="11" rx="1" fill="#fff"/><path d="M1.5 1.8l7 5.5l7 -5.5" fill="none" stroke="#2271b1" stroke-width="1.4"/></svg>
<svg class="b" style="left:14.9px;top:352px;" width="16" height="16" viewBox="0 0 16 16"><path d="M9.5 .8l6 4.2l-4.2 3.5l-3.3 -2.3z" fill="#a7aaad"/><path d="M7.4 7l3.2 2.2l-5.4 5.6c-1.6 1.6 -4.3 0 -3.2 -2z" fill="#a7aaad"/></svg>
<svg class="b" style="left:14.9px;top:383px;" width="16" height="16" viewBox="0 0 16 16"><g transform="rotate(45 8 8)" fill="#a7aaad"><rect x="4.6" y="-.5" width="2" height="5"/><rect x="9.4" y="-.5" width="2" height="5"/><path d="M3 3.8h10v3a5 5 0 0 1 -3.6 4.6v1.6h-2.8v-1.6a5 5 0 0 1 -3.6 -4.6z"/><rect x="7" y="12.5" width="2" height="4.5"/></g></svg>
<svg class="b" style="left:14.4px;top:413.5px;" width="17" height="15" viewBox="0 0 17 15"><circle cx="3.2" cy="3.5" r="2.1" fill="none" stroke="#a7aaad" stroke-width="2.2"/><circle cx="3.2" cy="11.5" r="2.1" fill="none" stroke="#a7aaad" stroke-width="2.2"/><path d="M4.5 4.2l12 5.8l-1 1.5l-4 .3l-8 -5zM4.5 10.8l12 -5.8l-1 -1.5l-4 -.3l-8 5z" fill="#a7aaad"/></svg>
<svg class="b" style="left:15.9px;top:444.5px;" width="14" height="15" viewBox="0 0 14 15"><circle cx="7" cy="4" r="3.6" fill="#a7aaad"/><path d="M.3 14.5c0 -5 2.7 -6.5 6.7 -6.5s6.7 1.5 6.7 6.5z" fill="#a7aaad"/></svg>
<svg class="b" style="left:15.4px;top:475.5px;" width="15" height="15" viewBox="0 0 15 15"><path d="M10.5 .5a4.3 4.3 0 0 0 -3.8 6l-6 6a1.6 1.6 0 0 0 2.3 2.3l6 -6a4.3 4.3 0 0 0 5.7 -5l-2.7 2.7l-2.5 -.6l-.6 -2.5l2.7 -2.7a4.3 4.3 0 0 0 -1.1 -.2z" fill="#a7aaad"/></svg>
<svg class="b" style="left:15.9px;top:507px;" width="14" height="14" viewBox="0 0 14 14"><rect x=".5" y=".5" width="13" height="13" rx="1" fill="#a7aaad"/><path d="M4.5 2.5v9M9.5 2.5v9" stroke="#1d2327" stroke-width="1.1"/><rect x="2.8" y="7.5" width="3.4" height="2.2" fill="#1d2327"/><rect x="7.8" y="4" width="3.4" height="2.2" fill="#1d2327"/></svg>
<svg class="b" style="left:15.4px;top:537px;" width="15" height="15" viewBox="0 0 15 15"><circle cx="7.5" cy="7.5" r="7.3" fill="#a7aaad"/><path d="M5.5 3.8v7.4l6 -3.7z" fill="#1d2327"/></svg>
<div class="b" style="left:1030px;top:101px;width:563px;height:751.5px;background:#fff;"></div>
<div class="b" style="left:1030px;top:101px;width:1px;height:751.5px;background:#c9ccd1;"></div>
<div class="b" style="left:1031px;top:100px;width:562px;height:25px;background:#f3f3f3;"></div>
<div class="b" style="left:1031px;top:125px;width:562px;height:1px;background:#cdcdcd;"></div>
<svg class="b" style="left:1039px;top:106.5px;" width="14" height="14" viewBox="0 0 14 14"><path d="M11.5 5V1.5h-10v10h3.5" fill="none" stroke="#5f6368" stroke-width="1.3"/><path d="M6 6l2.5 7l1.3 -2.6l2.7 2.7l1 -1l-2.7 -2.7l2.6 -1.3z" fill="#5f6368"/></svg>
<svg class="b" style="left:1063.5px;top:105.5px;" width="13" height="15" viewBox="0 0 13 15"><rect x="3.5" y=".7" width="8.5" height="12.5" rx="1" fill="none" stroke="#5f6368" stroke-width="1.3"/><rect x=".7" y="5.5" width="5.5" height="8.5" rx="1" fill="#f1f3f4" stroke="#5f6368" stroke-width="1.3"/></svg>
<div class="b" style="left:1087px;top:105px;width:1px;height:17px;background:#cbcdd1;"></div>
<span class="t" style="letter-spacing:-0.33px;left:1103.7px;top:105.8px;height:16px;line-height:16px;font-size:10.9px;color:#333;">Elements</span>
<div class="b" style="left:1093px;top:124px;width:64.5px;height:2px;background:#1a73e8;"></div>
<span class="t" style="letter-spacing:-0.17px;left:1167.5px;top:105.8px;height:16px;line-height:16px;font-size:10.9px;color:#5f6368;">Console</span>
<span class="t" style="letter-spacing:-0.37px;left:1227.3px;top:105.8px;height:16px;line-height:16px;font-size:10.9px;color:#5f6368;">Sources</span>
<span class="t" style="letter-spacing:0.089px;left:1286.4px;top:105.8px;height:16px;line-height:16px;font-size:10.9px;color:#5f6368;">Network</span>
<span class="t" style="letter-spacing:-0.209px;left:1348.4px;top:105.8px;height:16px;line-height:16px;font-size:10.9px;color:#5f6368;">Performance</span>
<span class="t" style="letter-spacing:0.072px;left:1430px;top:105.8px;height:16px;line-height:16px;font-size:10.9px;color:#5f6368;">Memory</span>
<svg class="b" style="left:1487.8px;top:109.5px;" width="9" height="8" viewBox="0 0 9 8"><path d="M1 .8L4 4L1 7.2M5 .8L8 4L5 7.2" fill="none" stroke="#5f6368" stroke-width="1.2"/></svg>
<div class="b" style="left:1510px;top:105px;width:1px;height:17px;background:#cbcdd1;"></div>
<svg class="b" style="left:1520.9px;top:107px;" width="13" height="13" viewBox="0 0 15 15"><rect x="6.3" y="0" width="2.4" height="15" fill="#5f6368" transform="rotate(0 7.5 7.5)"/><rect x="6.3" y="0" width="2.4" height="15" fill="#5f6368" transform="rotate(45 7.5 7.5)"/><rect x="6.3" y="0" width="2.4" height="15" fill="#5f6368" transform="rotate(90 7.5 7.5)"/><rect x="6.3" y="0" width="2.4" height="15" fill="#5f6368" transform="rotate(135 7.5 7.5)"/><rect x="6.3" y="0" width="2.4" height="15" fill="#5f6368" transform="rotate(180 7.5 7.5)"/><rect x="6.3" y="0" width="2.4" height="15" fill="#5f6368" transform="rotate(225 7.5 7.5)"/><rect x="6.3" y="0" width="2.4" height="15" fill="#5f6368" transform="rotate(270 7.5 7.5)"/><rect x="6.3" y="0" width="2.4" height="15" fill="#5f6368" transform="rotate(315 7.5 7.5)"/><circle cx="7.5" cy="7.5" r="5.5" fill="#5f6368"/><circle cx="7.5" cy="7.5" r="2.3" fill="#f3f3f3"/></svg>
<svg class="b" style="left:1551px;top:106.5px;" width="4" height="14" viewBox="0 0 4 14"><circle cx="2" cy="2" r="1.4" fill="#5f6368"/><circle cx="2" cy="7" r="1.4" fill="#5f6368"/><circle cx="2" cy="12" r="1.4" fill="#5f6368"/></svg>
<svg class="b" style="left:1572.5px;top:108px;" width="11" height="11" viewBox="0 0 11 11"><path d="M1 1l9 9M10 1l-9 9" stroke="#5f6368" stroke-width="1.4"/></svg>
<div class="b" style="left:1031px;top:296.3px;width:546.5px;height:15px;background:#cfe8fc;"></div>
<span class="t" style="left:1034px;top:295px;height:16px;line-height:16px;font-size:11px;color:#5f6368;font-weight:700;letter-spacing:.3px;">...</span>
<svg class="b" style="left:1184.9px;top:132.2px;" width="7" height="6" viewBox="0 0 7 6"><path d="M0 .5h7L3.5 5.5z" fill="#6e6e6e"/></svg>
<span class="t" style="left:1195.3px;top:129.1px;height:14px;line-height:14px;font-size:10.8px;color:#222;font-family:'Liberation Mono',monospace;letter-spacing:-0.541px;"><span style="color:#a894a6">&lt;</span><span style="color:#881280">div</span> <span style="color:#994500">id</span><span style="color:#a894a6">="</span><span style="color:#1a1aa6">tab-visual</span><span style="color:#a894a6">"</span> <span style="color:#994500">class</span><span style="color:#a894a6">="</span><span style="color:#1a1aa6">tab-content wp-clearfix tab-active</span><span style="color:#a894a6">"</span><span style="color:#a894a6">&gt;</span></span>
<svg class="b" style="left:1195.6px;top:147.55px;" width="7" height="6" viewBox="0 0 7 6"><path d="M0 .5h7L3.5 5.5z" fill="#6e6e6e"/></svg>
<span class="t" style="left:1206px;top:144.45px;height:14px;line-height:14px;font-size:10.8px;color:#222;font-family:'Liberation Mono',monospace;letter-spacing:-0.541px;"><span style="color:#a894a6">&lt;</span><span style="color:#881280">div</span> <span style="color:#994500">class</span><span style="color:#a894a6">="</span><span style="color:#1a1aa6">cf7s-visual-root___3HBOR</span><span style="color:#a894a6">"</span><span style="color:#a894a6">&gt;</span></span>
<svg class="b" style="left:1206.3px;top:162.9px;" width="7" height="6" viewBox="0 0 7 6"><path d="M0 .5h7L3.5 5.5z" fill="#6e6e6e"/></svg>
<span class="t" style="left:1216.7px;top:159.8px;height:14px;line-height:14px;font-size:10.8px;color:#222;font-family:'Liberation Mono',monospace;letter-spacing:-0.541px;"><span style="color:#a894a6">&lt;</span><span style="color:#881280">div</span> <span style="color:#994500">class</span><span style="color:#a894a6">="</span><span style="color:#1a1aa6">Form___vhG7t</span><span style="color:#a894a6">"</span><span style="color:#a894a6">&gt;</span></span>
<svg class="b" style="left:1217px;top:178.25px;" width="7" height="6" viewBox="0 0 7 6"><path d="M0 .5h7L3.5 5.5z" fill="#6e6e6e"/></svg>
<span class="t" style="left:1227.4px;top:175.15px;height:14px;line-height:14px;font-size:10.8px;color:#222;font-family:'Liberation Mono',monospace;letter-spacing:-0.541px;"><span style="color:#a894a6">&lt;</span><span style="color:#881280">div</span> <span style="color:#994500">class</span><span style="color:#a894a6">="</span><span style="color:#1a1aa6">FormItems___3Nq_r</span><span style="color:#a894a6">"</span><span style="color:#a894a6">&gt;</span></span>
<svg class="b" style="left:1228.2px;top:193.1px;" width="6" height="7" viewBox="0 0 6 7"><path d="M.5 0v7L5.5 3.5z" fill="#6e6e6e"/></svg>
<span class="t" style="left:1238.1px;top:190.5px;height:14px;line-height:14px;font-size:10.8px;color:#222;font-family:'Liberation Mono',monospace;letter-spacing:-0.541px;"><span style="color:#a894a6">&lt;</span><span style="color:#881280">div</span> <span style="color:#994500">class</span><span style="color:#a894a6">="</span><span style="color:#1a1aa6">Controls___kju7p</span><span style="color:#a894a6">"</span><span style="color:#a894a6">&gt;</span><span style="color:#333">…</span><span style="color:#a894a6">&lt;/</span><span style="color:#881280">div</span><span style="color:#a894a6">&gt;</span></span>
<span class="t" style="left:1238.1px;top:205.85px;height:14px;line-height:14px;font-size:10.8px;color:#222;font-family:'Liberation Mono',monospace;letter-spacing:-0.541px;"><span style="color:#a894a6">&lt;</span><span style="color:#881280">div</span> <span style="color:#994500">class</span><span style="color:#a894a6">="</span><span style="color:#1a1aa6">FormNotice___S7kYy</span><span style="color:#a894a6">"</span><span style="color:#a894a6">&gt;</span><span style="color:#a894a6">&lt;/</span><span style="color:#881280">div</span><span style="color:#a894a6">&gt;</span></span>
<svg class="b" style="left:1228.2px;top:223.8px;" width="6" height="7" viewBox="0 0 6 7"><path d="M.5 0v7L5.5 3.5z" fill="#6e6e6e"/></svg>
<span class="t" style="left:1238.1px;top:221.2px;height:14px;line-height:14px;font-size:10.8px;color:#222;font-family:'Liberation Mono',monospace;letter-spacing:-0.541px;"><span style="color:#a894a6">&lt;</span><span style="color:#881280">div</span> <span style="color:#994500">class</span><span style="color:#a894a6">="</span><span style="color:#1a1aa6">Items___1jMS3</span><span style="color:#a894a6">"</span><span style="color:#a894a6">&gt;</span><span style="color:#333">…</span><span style="color:#a894a6">&lt;/</span><span style="color:#881280">div</span><span style="color:#a894a6">&gt;</span></span>
<span class="t" style="left:1227.4px;top:236.55px;height:14px;line-height:14px;font-size:10.8px;color:#222;font-family:'Liberation Mono',monospace;letter-spacing:-0.541px;"><span style="color:#a894a6">&lt;/</span><span style="color:#881280">div</span><span style="color:#a894a6">&gt;</span></span>
<svg class="b" style="left:1217px;top:255px;" width="7" height="6" viewBox="0 0 7 6"><path d="M0 .5h7L3.5 5.5z" fill="#6e6e6e"/></svg>
<span class="t" style="left:1227.4px;top:251.9px;height:14px;line-height:14px;font-size:10.8px;color:#222;font-family:'Liberation Mono',monospace;letter-spacing:-0.541px;"><span style="color:#a894a6">&lt;</span><span style="color:#881280">div</span> <span style="color:#994500">class</span><span style="color:#a894a6">="</span><span style="color:#1a1aa6">Operate___2qc0q</span><span style="color:#a894a6">"</span><span style="color:#a894a6">&gt;</span></span>
<svg class="b" style="left:1227.7px;top:270.35px;" width="7" height="6" viewBox="0 0 7 6"><path d="M0 .5h7L3.5 5.5z" fill="#6e6e6e"/></svg>
<span class="t" style="left:1238.1px;top:267.25px;height:14px;line-height:14px;font-size:10.8px;color:#222;font-family:'Liberation Mono',monospace;letter-spacing:-0.541px;"><span style="color:#a894a6">&lt;</span><span style="color:#881280">div</span> <span style="color:#994500">class</span><span style="color:#a894a6">="</span><span style="color:#1a1aa6">edit___bkz5l</span><span style="color:#a894a6">"</span><span style="color:#a894a6">&gt;</span></span>
<svg class="b" style="left:1238.9px;top:285.2px;" width="6" height="7" viewBox="0 0 6 7"><path d="M.5 0v7L5.5 3.5z" fill="#6e6e6e"/></svg>
<span class="t" style="left:1248.8px;top:282.6px;height:14px;line-height:14px;font-size:10.8px;color:#222;font-family:'Liberation Mono',monospace;letter-spacing:-0.541px;"><span style="color:#a894a6">&lt;</span><span style="color:#881280">select</span> <span style="color:#994500">class</span><span style="color:#a894a6">="</span><span style="color:#1a1aa6">fieldChangeSelect___3gt-v</span><span style="color:#a894a6">"</span><span style="color:#a894a6">&gt;</span><span style="color:#333">…</span><span style="color:#a894a6">&lt;/</span><span style="color:#881280">select</span><span style="color:#a894a6">&gt;</span></span>
<svg class="b" style="left:1238.4px;top:301.05px;" width="7" height="6" viewBox="0 0 7 6"><path d="M0 .5h7L3.5 5.5z" fill="#6e6e6e"/></svg>
<span class="t" style="left:1248.8px;top:297.95px;height:14px;line-height:14px;font-size:10.8px;color:#222;font-family:'Liberation Mono',monospace;letter-spacing:-0.541px;"><span style="color:#a894a6">&lt;</span><span style="color:#881280">div</span> <span style="color:#994500">class</span><span style="color:#a894a6">="</span><span style="color:#1a1aa6">attribute___2PJGD</span><span style="color:#a894a6">"</span><span style="color:#a894a6">&gt;</span><span style="color:#777;font-style:italic"> == $0</span></span>
<svg class="b" style="left:1249.6px;top:315.9px;" width="6" height="7" viewBox="0 0 6 7"><path d="M.5 0v7L5.5 3.5z" fill="#6e6e6e"/></svg>
<span class="t" style="left:1259.5px;top:313.3px;height:14px;line-height:14px;font-size:10.8px;color:#222;font-family:'Liberation Mono',monospace;letter-spacing:-0.541px;"><span style="color:#a894a6">&lt;</span><span style="color:#881280">div</span> <span style="color:#994500">class</span><span style="color:#a894a6">="</span><span style="color:#1a1aa6">label___1U6ET</span><span style="color:#a894a6">"</span><span style="color:#a894a6">&gt;</span><span style="color:#333">…</span><span style="color:#a894a6">&lt;/</span><span style="color:#881280">div</span><span style="color:#a894a6">&gt;</span></span>
<svg class="b" style="left:1249.6px;top:331.25px;" width="6" height="7" viewBox="0 0 6 7"><path d="M.5 0v7L5.5 3.5z" fill="#6e6e6e"/></svg>
<span class="t" style="left:1259.5px;top:328.65px;height:14px;line-height:14px;font-size:10.8px;color:#222;font-family:'Liberation Mono',monospace;letter-spacing:-0.541px;"><span style="color:#a894a6">&lt;</span><span style="color:#881280">div</span> <span style="color:#994500">class</span><span style="color:#a894a6">="</span><span style="color:#1a1aa6">value___18pw0</span><span style="color:#a894a6">"</span><span style="color:#a894a6">&gt;</span><span style="color:#333">…</span><span style="color:#a894a6">&lt;/</span><span style="color:#881280">div</span><span style="color:#a894a6">&gt;</span></span>
<span class="t" style="left:1248.8px;top:344px;height:14px;line-height:14px;font-size:10.8px;color:#222;font-family:'Liberation Mono',monospace;letter-spacing:-0.541px;"><span style="color:#a894a6">&lt;/</span><span style="color:#881280">div</span><span style="color:#a894a6">&gt;</span></span>
<svg class="b" style="left:1238.9px;top:361.95px;" width="6" height="7" viewBox="0 0 6 7"><path d="M.5 0v7L5.5 3.5z" fill="#6e6e6e"/></svg>
<span class="t" style="left:1248.8px;top:359.35px;height:14px;line-height:14px;font-size:10.8px;color:#222;font-family:'Liberation Mono',monospace;letter-spacing:-0.541px;"><span style="color:#a894a6">&lt;</span><span style="color:#881280">div</span> <span style="color:#994500">class</span><span style="color:#a894a6">="</span><span style="color:#1a1aa6">attribute___2PJGD</span><span style="color:#a894a6">"</span><span style="color:#a894a6">&gt;</span><span style="color:#333">…</span><span style="color:#a894a6">&lt;/</span><span style="color:#881280">div</span><span style="color:#a894a6">&gt;</span></span>
<svg class="b" style="left:1238.9px;top:377.3px;" width="6" height="7" viewBox="0 0 6 7"><path d="M.5 0v7L5.5 3.5z" fill="#6e6e6e"/></svg>
<span class="t" style="left:1248.8px;top:374.7px;height:14px;line-height:14px;font-size:10.8px;color:#222;font-family:'Liberation Mono',monospace;letter-spacing:-0.541px;"><span style="color:#a894a6">&lt;</span><span style="color:#881280">div</span> <span style="color:#994500">class</span><span style="color:#a894a6">="</span><span style="color:#1a1aa6">attribute___2PJGD</span><span style="color:#a894a6">"</span><span style="color:#a894a6">&gt;</span><span style="color:#333">…</span><span style="color:#a894a6">&lt;/</span><span style="color:#881280">div</span><span style="color:#a894a6">&gt;</span></span>
<svg class="b" style="left:1238.9px;top:392.65px;" width="6" height="7" viewBox="0 0 6 7"><path d="M.5 0v7L5.5 3.5z" fill="#6e6e6e"/></svg>
<span class="t" style="left:1248.8px;top:390.05px;height:14px;line-height:14px;font-size:10.8px;color:#222;font-family:'Liberation Mono',monospace;letter-spacing:-0.541px;"><span style="color:#a894a6">&lt;</span><span style="color:#881280">div</span> <span style="color:#994500">class</span><span style="color:#a894a6">="</span><span style="color:#1a1aa6">attribute___2PJGD</span><span style="color:#a894a6">"</span><span style="color:#a894a6">&gt;</span><span style="color:#333">…</span><span style="color:#a894a6">&lt;/</span><span style="color:#881280">div</span><span style="color:#a894a6">&gt;</span></span>
<svg class="b" style="left:1238.9px;top:408px;" width="6" height="7" viewBox="0 0 6 7"><path d="M.5 0v7L5.5 3.5z" fill="#6e6e6e"/></svg>
<span class="t" style="left:1248.8px;top:405.4px;height:14px;line-height:14px;font-size:10.8px;color:#222;font-family:'Liberation Mono',monospace;letter-spacing:-0.541px;"><span style="color:#a894a6">&lt;</span><span style="color:#881280">div</span> <span style="color:#994500">class</span><span style="color:#a894a6">="</span><span style="color:#1a1aa6">attribute___2PJGD</span><span style="color:#a894a6">"</span><span style="color:#a894a6">&gt;</span><span style="color:#333">…</span><span style="color:#a894a6">&lt;/</span><span style="color:#881280">div</span><span style="color:#a894a6">&gt;</span></span>
<svg class="b" style="left:1238.9px;top:423.35px;" width="6" height="7" viewBox="0 0 6 7"><path d="M.5 0v7L5.5 3.5z" fill="#6e6e6e"/></svg>
<span class="t" style="left:1248.8px;top:420.75px;height:14px;line-height:14px;font-size:10.8px;color:#222;font-family:'Liberation Mono',monospace;letter-spacing:-0.541px;"><span style="color:#a894a6">&lt;</span><span style="color:#881280">div</span> <span style="color:#994500">class</span><span style="color:#a894a6">="</span><span style="color:#1a1aa6">attribute___2PJGD</span><span style="color:#a894a6">"</span><span style="color:#a894a6">&gt;</span><span style="color:#333">…</span><span style="color:#a894a6">&lt;/</span><span style="color:#881280">div</span><span style="color:#a894a6">&gt;</span></span>
<svg class="b" style="left:1238.9px;top:438.7px;" width="6" height="7" viewBox="0 0 6 7"><path d="M.5 0v7L5.5 3.5z" fill="#6e6e6e"/></svg>
<span class="t" style="left:1248.8px;top:436.1px;height:14px;line-height:14px;font-size:10.8px;color:#222;font-family:'Liberation Mono',monospace;letter-spacing:-0.541px;"><span style="color:#a894a6">&lt;</span><span style="color:#881280">div</span> <span style="color:#994500">class</span><span style="color:#a894a6">="</span><span style="color:#1a1aa6">attribute___2PJGD</span><span style="color:#a894a6">"</span><span style="color:#a894a6">&gt;</span><span style="color:#333">…</span><span style="color:#a894a6">&lt;/</span><span style="color:#881280">div</span><span style="color:#a894a6">&gt;</span></span>
<svg class="b" style="left:1238.9px;top:454.05px;" width="6" height="7" viewBox="0 0 6 7"><path d="M.5 0v7L5.5 3.5z" fill="#6e6e6e"/></svg>
<span class="t" style="left:1248.8px;top:451.45px;height:14px;line-height:14px;font-size:10.8px;color:#222;font-family:'Liberation Mono',monospace;letter-spacing:-0.541px;"><span style="color:#a894a6">&lt;</span><span style="color:#881280">div</span> <span style="color:#994500">class</span><span style="color:#a894a6">="</span><span style="color:#1a1aa6">attribute___2PJGD</span><span style="color:#a894a6">"</span><span style="color:#a894a6">&gt;</span><span style="color:#333">…</span><span style="color:#a894a6">&lt;/</span><span style="color:#881280">div</span><span style="color:#a894a6">&gt;</span></span>
<span class="t" style="left:1248.8px;top:466.8px;height:14px;line-height:14px;font-size:10.8px;color:#222;font-family:'Liberation Mono',monospace;letter-spacing:-0.541px;"><span style="color:#a894a6">&lt;</span><span style="color:#881280">button</span> <span style="color:#994500">class</span><span style="color:#a894a6">="</span><span style="color:#1a1aa6">button-primary</span><span style="color:#a894a6">"</span><span style="color:#a894a6">&gt;</span><span style="color:#222">Done</span><span style="color:#a894a6">&lt;/</span><span style="color:#881280">button</span><span style="color:#a894a6">&gt;</span></span>
<span class="t" style="left:1238.1px;top:482.15px;height:14px;line-height:14px;font-size:10.8px;color:#222;font-family:'Liberation Mono',monospace;letter-spacing:-0.541px;"><span style="color:#a894a6">&lt;/</span><span style="color:#881280">div</span><span style="color:#a894a6">&gt;</span></span>
<svg class="b" style="left:1228.2px;top:500.1px;" width="6" height="7" viewBox="0 0 6 7"><path d="M.5 0v7L5.5 3.5z" fill="#6e6e6e"/></svg>
<span class="t" style="left:1238.1px;top:497.5px;height:14px;line-height:14px;font-size:10.8px;color:#222;font-family:'Liberation Mono',monospace;letter-spacing:-0.541px;"><span style="color:#a894a6">&lt;</span><span style="color:#881280">div</span> <span style="color:#994500">class</span><span style="color:#a894a6">="</span><span style="color:#1a1aa6">select___2eVfd</span><span style="color:#a894a6">"</span><span style="color:#a894a6">&gt;</span><span style="color:#333">…</span><span style="color:#a894a6">&lt;/</span><span style="color:#881280">div</span><span style="color:#a894a6">&gt;</span></span>
<span class="t" style="left:1227.4px;top:512.85px;height:14px;line-height:14px;font-size:10.8px;color:#222;font-family:'Liberation Mono',monospace;letter-spacing:-0.541px;"><span style="color:#a894a6">&lt;/</span><span style="color:#881280">div</span><span style="color:#a894a6">&gt;</span></span>
<div class="b" style="left:1577px;top:126px;width:16px;height:396px;background:#f1f1f1;"></div>
<div class="b" style="left:1579.3px;top:221.4px;width:11.7px;height:45.5px;background:#c1c1c1;"></div>
<svg class="b" style="left:1581.3px;top:132.3px;" width="8" height="5" viewBox="0 0 8 5"><path d="M0 5L4 .5L8 5z" fill="#505050"/></svg>
<svg class="b" style="left:1581.3px;top:511px;" width="8" height="5" viewBox="0 0 8 5"><path d="M0 0L4 4.5L8 0z" fill="#505050"/></svg>
<div class="b" style="left:1031px;top:522px;width:562px;height:15px;background:#f1f1f1;"></div>
<div class="b" style="left:1046px;top:524.8px;width:485px;height:9.8px;background:#c1c1c1;"></div>
<svg class="b" style="left:1035.5px;top:525.7px;" width="5" height="8" viewBox="0 0 5 8"><path d="M5 0L.5 4L5 8z" fill="#505050"/></svg>
<svg class="b" style="left:1567.5px;top:525.7px;" width="5" height="8" viewBox="0 0 5 8"><path d="M0 0L4.5 4L0 8z" fill="#505050"/></svg>
<div class="b" style="left:1577px;top:522px;width:16px;height:15px;background:#dcdcdc;"></div>
<div class="b" style="left:1031px;top:537px;width:562px;height:22px;background:#fff;"></div>
<div class="b" style="left:1031px;top:538px;width:24px;height:21px;background:#f1f3f4;"></div>
<div class="b" style="left:1031px;top:537px;width:562px;height:1px;background:#dadce0;"></div>
<div class="b" style="left:1456px;top:538px;width:137px;height:21px;background:#f1f3f4;"></div>
<div class="b" style="left:1567.5px;top:538px;width:0.8px;height:21px;background:#fff;"></div>
<span class="t" style="left:1037.5px;top:540.5px;height:16px;line-height:16px;font-size:12px;color:#444;font-weight:700;letter-spacing:.6px;">...</span>
<span class="t" style="letter-spacing:-0.507px;left:1055.5px;top:541px;height:16px;line-height:16px;font-size:11.2px;"><span style="color:#881280"></span><span style="color:#994500">visual-root___3HBOR</span></span>
<span class="t" style="letter-spacing:-0.544px;left:1167.9px;top:541px;height:16px;line-height:16px;font-size:11.2px;"><span style="color:#881280">div</span><span style="color:#994500">.Form___vhG7t</span></span>
<span class="t" style="letter-spacing:-0.467px;left:1263.6px;top:541px;height:16px;line-height:16px;font-size:11.2px;"><span style="color:#881280">div</span><span style="color:#994500">.Operate___2qc0q</span></span>
<span class="t" style="letter-spacing:-0.374px;left:1374.5px;top:541px;height:16px;line-height:16px;font-size:11.2px;"><span style="color:#881280">div</span><span style="color:#994500">.edit___bkz5l</span></span>
<span class="t" style="letter-spacing:-0.526px;left:1460.7px;top:541px;height:16px;line-height:16px;font-size:11.2px;"><span style="color:#881280">div</span><span style="color:#994500">.attribute___2PJGD</span></span>
<span class="t" style="left:1575px;top:540.5px;height:16px;line-height:16px;font-size:12px;color:#a0a4a8;font-weight:700;letter-spacing:.6px;">...</span>
<div class="b" style="left:1031px;top:559px;width:562px;height:26px;background:#f3f3f3;"></div>
<div class="b" style="left:1031px;top:559px;width:562px;height:1px;background:#cdcdcd;"></div>
<div class="b" style="left:1031px;top:584px;width:562px;height:1px;background:#cdcdcd;"></div>
<div class="b" style="left:1031px;top:583px;width:45px;height:2px;background:#1a73e8;"></div>
<span class="t" style="letter-spacing:-0.48px;left:1039.6px;top:564.6px;height:16px;line-height:16px;font-size:10.9px;color:#333;">Styles</span>
<span class="t" style="letter-spacing:0.026px;left:1084.5px;top:564.6px;height:16px;line-height:16px;font-size:10.9px;color:#5f6368;">Computed</span>
<span class="t" style="letter-spacing:-0.138px;left:1153.4px;top:564.6px;height:16px;line-height:16px;font-size:10.9px;color:#5f6368;">Layout</span>
<span class="t" style="letter-spacing:-0.295px;left:1203px;top:564.6px;height:16px;line-height:16px;font-size:10.9px;color:#5f6368;">Event Listeners</span>
<span class="t" style="letter-spacing:-0.121px;left:1291.8px;top:564.6px;height:16px;line-height:16px;font-size:10.9px;color:#5f6368;">DOM Breakpoints</span>
<span class="t" style="letter-spacing:-0.108px;left:1394.4px;top:564.6px;height:16px;line-height:16px;font-size:10.9px;color:#5f6368;">Properties</span>
<span class="t" style="letter-spacing:-0.166px;left:1460.4px;top:564.6px;height:16px;line-height:16px;font-size:10.9px;color:#5f6368;">Accessibility</span>
<div class="b" style="left:1031px;top:585.5px;width:546.5px;height:23px;background:#f3f3f3;"></div>
<div class="b" style="left:1033.8px;top:587px;width:420.4px;height:18.5px;background:#fff;"></div>
<span class="t" style="letter-spacing:-0.17px;left:1037.4px;top:589px;height:16px;line-height:16px;font-size:10.9px;color:#757575;">Filter</span>
<span class="t" style="left:1464.7px;top:590.6px;height:14px;line-height:14px;font-size:10.8px;color:#5f6368;font-family:'Liberation Mono',monospace;letter-spacing:-0.541px;">:hov</span>
<span class="t" style="left:1497.3px;top:590.6px;height:14px;line-height:14px;font-size:10.8px;color:#5f6368;font-family:'Liberation Mono',monospace;letter-spacing:-0.541px;">.cls</span>
<svg class="b" style="left:1531.7px;top:591px;" width="11" height="11" viewBox="0 0 11 11"><path d="M5.5 .5v10M.5 5.5h10" stroke="#5f6368" stroke-width="1.3"/></svg>
<svg class="b" style="left:1543.7px;top:602px;" width="4" height="4" viewBox="0 0 4 4"><path d="M4 0v4h-4z" fill="#5f6368"/></svg>
<svg class="b" style="left:1555.8px;top:591px;" width="13" height="12" viewBox="0 0 13 12"><rect x=".6" y=".6" width="11.8" height="10.8" fill="none" stroke="#5f6368" stroke-width="1.2"/><path d="M8.5 .6v10.8" stroke="#5f6368" stroke-width="1.2"/><path d="M6.5 3.5v5l-3.5 -2.5z" fill="#5f6368"/></svg>
<div class="b" style="left:1031px;top:608.5px;width:546.5px;height:0.8px;background:#e3e3e3;"></div>
<span class="t" style="left:1034.5px;top:610.8px;height:14px;line-height:14px;font-size:10.8px;color:#5f6368;font-family:'Liberation Mono',monospace;letter-spacing:-0.541px;">element.style {</span>
<span class="t" style="left:1034.5px;top:625.6px;height:14px;line-height:14px;font-size:10.8px;color:#222;font-family:'Liberation Mono',monospace;letter-spacing:-0.541px;">}</span>
<div class="b" style="left:1031px;top:641px;width:546.5px;height:1px;background:#e0e0e0;"></div>
<span class="t" style="left:1034.5px;top:644.1px;height:14px;line-height:14px;font-size:10.8px;color:#222;font-family:'Liberation Mono',monospace;letter-spacing:-0.541px;"><span style="color:#222">.attribute___2PJGD</span><span style="color:#888">, .row___1Ar16</span> {</span>
<span class="t" style="right:24.5px;top:644.1px;height:14px;line-height:14px;font-size:10.8px;color:#5f6368;font-family:'Liberation Mono',monospace;letter-spacing:-0.541px;text-decoration:underline;">visual.min.…ver=2.4.1:1</span>
<span class="t" style="left:1050.8px;top:659px;height:14px;line-height:14px;font-size:10.8px;color:#222;font-family:'Liberation Mono',monospace;letter-spacing:-0.541px;text-decoration:line-through;text-decoration-color:#8e8e8e;"><span style="color:#8e8e8e">display: -ms-flexbox;</span></span>
<span class="t" style="left:1050.8px;top:671.3px;height:14px;line-height:14px;font-size:10.8px;color:#222;font-family:'Liberation Mono',monospace;letter-spacing:-0.541px;"><span style="color:#c80000">display</span><span style="color:#222">: flex;</span></span>
<span class="t" style="left:1050.8px;top:683.5px;height:14px;line-height:14px;font-size:10.8px;color:#222;font-family:'Liberation Mono',monospace;letter-spacing:-0.541px;text-decoration:line-through;text-decoration-color:#444;"><span style="color:#c80000">-webkit-box-sizing</span><span style="color:#222">: border-box;</span></span>
<span class="t" style="left:1050.8px;top:696.8px;height:14px;line-height:14px;font-size:10.8px;color:#222;font-family:'Liberation Mono',monospace;letter-spacing:-0.541px;"><span style="color:#c80000">box-sizing</span><span style="color:#222">: border-box;</span></span>
<span class="t" style="left:1050.8px;top:709.1px;height:14px;line-height:14px;font-size:10.8px;color:#222;font-family:'Liberation Mono',monospace;letter-spacing:-0.541px;text-decoration:line-through;text-decoration-color:#8e8e8e;"><span style="color:#8e8e8e">-ms-flex-pack: distribute;</span></span>
<span class="t" style="left:1050.8px;top:721.8px;height:14px;line-height:14px;font-size:10.8px;color:#222;font-family:'Liberation Mono',monospace;letter-spacing:-0.541px;"><span style="color:#c80000">justify-content</span><span style="color:#222">: space-around;</span></span>
<span class="t" style="left:1034.5px;top:735.2px;height:14px;line-height:14px;font-size:10.8px;color:#222;font-family:'Liberation Mono',monospace;letter-spacing:-0.541px;">}</span>
<div class="b" style="left:1031px;top:751px;width:546.5px;height:1px;background:#e0e0e0;"></div>
<span class="t" style="left:1034.5px;top:753.6px;height:14px;line-height:14px;font-size:10.8px;color:#222;font-family:'Liberation Mono',monospace;letter-spacing:-0.541px;">a, div {</span>
<span class="t" style="right:24.5px;top:753.6px;height:14px;line-height:14px;font-size:10.8px;color:#5f6368;font-family:'Liberation Mono',monospace;letter-spacing:-0.541px;text-decoration:underline;">load-styles…k&amp;ver=5.7:6</span>
<span class="t" style="left:1050.8px;top:768.2px;height:14px;line-height:14px;font-size:10.8px;color:#222;font-family:'Liberation Mono',monospace;letter-spacing:-0.541px;"><span style="color:#c80000">outline</span><span style="color:#222">: <span style="font-size:8px;color:#555">&#9654;</span> 0;</span></span>
<span class="t" style="left:1034.5px;top:781.2px;height:14px;line-height:14px;font-size:10.8px;color:#222;font-family:'Liberation Mono',monospace;letter-spacing:-0.541px;">}</span>
<div class="b" style="left:1031px;top:797px;width:546.5px;height:1px;background:#e0e0e0;"></div>
<div class="b" style="left:1031px;top:798px;width:546.5px;height:45px;background:#fafafa;"></div>
<span class="t" style="left:1034.5px;top:799.6px;height:14px;line-height:14px;font-size:10.8px;color:#222;font-style:italic;font-family:'Liberation Mono',monospace;letter-spacing:-0.541px;">div {</span>
<span class="t" style="right:24.5px;top:799.6px;height:14px;line-height:14px;font-size:10.8px;color:#777;font-style:italic;font-family:'Liberation Mono',monospace;letter-spacing:-0.541px;">user agent stylesheet</span>
<span class="t" style="left:1050.8px;top:813.9px;height:14px;line-height:14px;font-size:10.8px;color:#222;font-style:italic;font-family:'Liberation Mono',monospace;letter-spacing:-0.541px;text-decoration:line-through;text-decoration-color:#444;"><span style="color:#c80000">display</span><span style="color:#222">: block;</span></span>
<span class="t" style="left:1034.5px;top:827.3px;height:14px;line-height:14px;font-size:10.8px;color:#222;font-style:italic;font-family:'Liberation Mono',monospace;letter-spacing:-0.541px;">}</span>
<div class="b" style="left:1031px;top:843px;width:546.5px;height:1px;background:#e0e0e0;"></div>
<div class="b" style="left:1031px;top:844px;width:546.5px;height:8.5px;background:#f6f6f6;"></div>
<div class="b" style="left:1032px;top:846px;width:545px;height:6.5px;overflow:hidden"><span class="t" style="left:5px;top:0;font-size:10.9px;line-height:14px;color:#5f6368">Inherited from <span style="color:#c80000;font-family:'Liberation Mono',monospace">div.edit___bkz5l</span></span></div>
<div class="b" style="left:1577px;top:585px;width:16px;height:267.5px;background:#f1f1f1;"></div>
<div class="b" style="left:1579.3px;top:600.4px;width:11.7px;height:68.3px;background:#c1c1c1;"></div>
<svg class="b" style="left:1581.3px;top:590.8px;" width="8" height="5" viewBox="0 0 8 5"><path d="M0 5L4 .5L8 5z" fill="#a3a3a3"/></svg>
<svg class="b" style="left:1581.3px;top:842.5px;" width="8" height="5" viewBox="0 0 8 5"><path d="M0 0L4 4.5L8 0z" fill="#505050"/></svg>
<div class="b" style="left:0;top:852.5px;width:1600px;height:7.5px;background:linear-gradient(90deg,#0a9de2 0,#0b93dc 30%,#0c84d2 55%,#0d62bd 75%,#0a3c9c 100%)"></div>
<div class="b" style="left:0;top:852.5px;width:1600px;height:7.5px;background:linear-gradient(180deg,rgba(0,10,40,.32),rgba(0,10,40,.05))"></div>
</body></html>
